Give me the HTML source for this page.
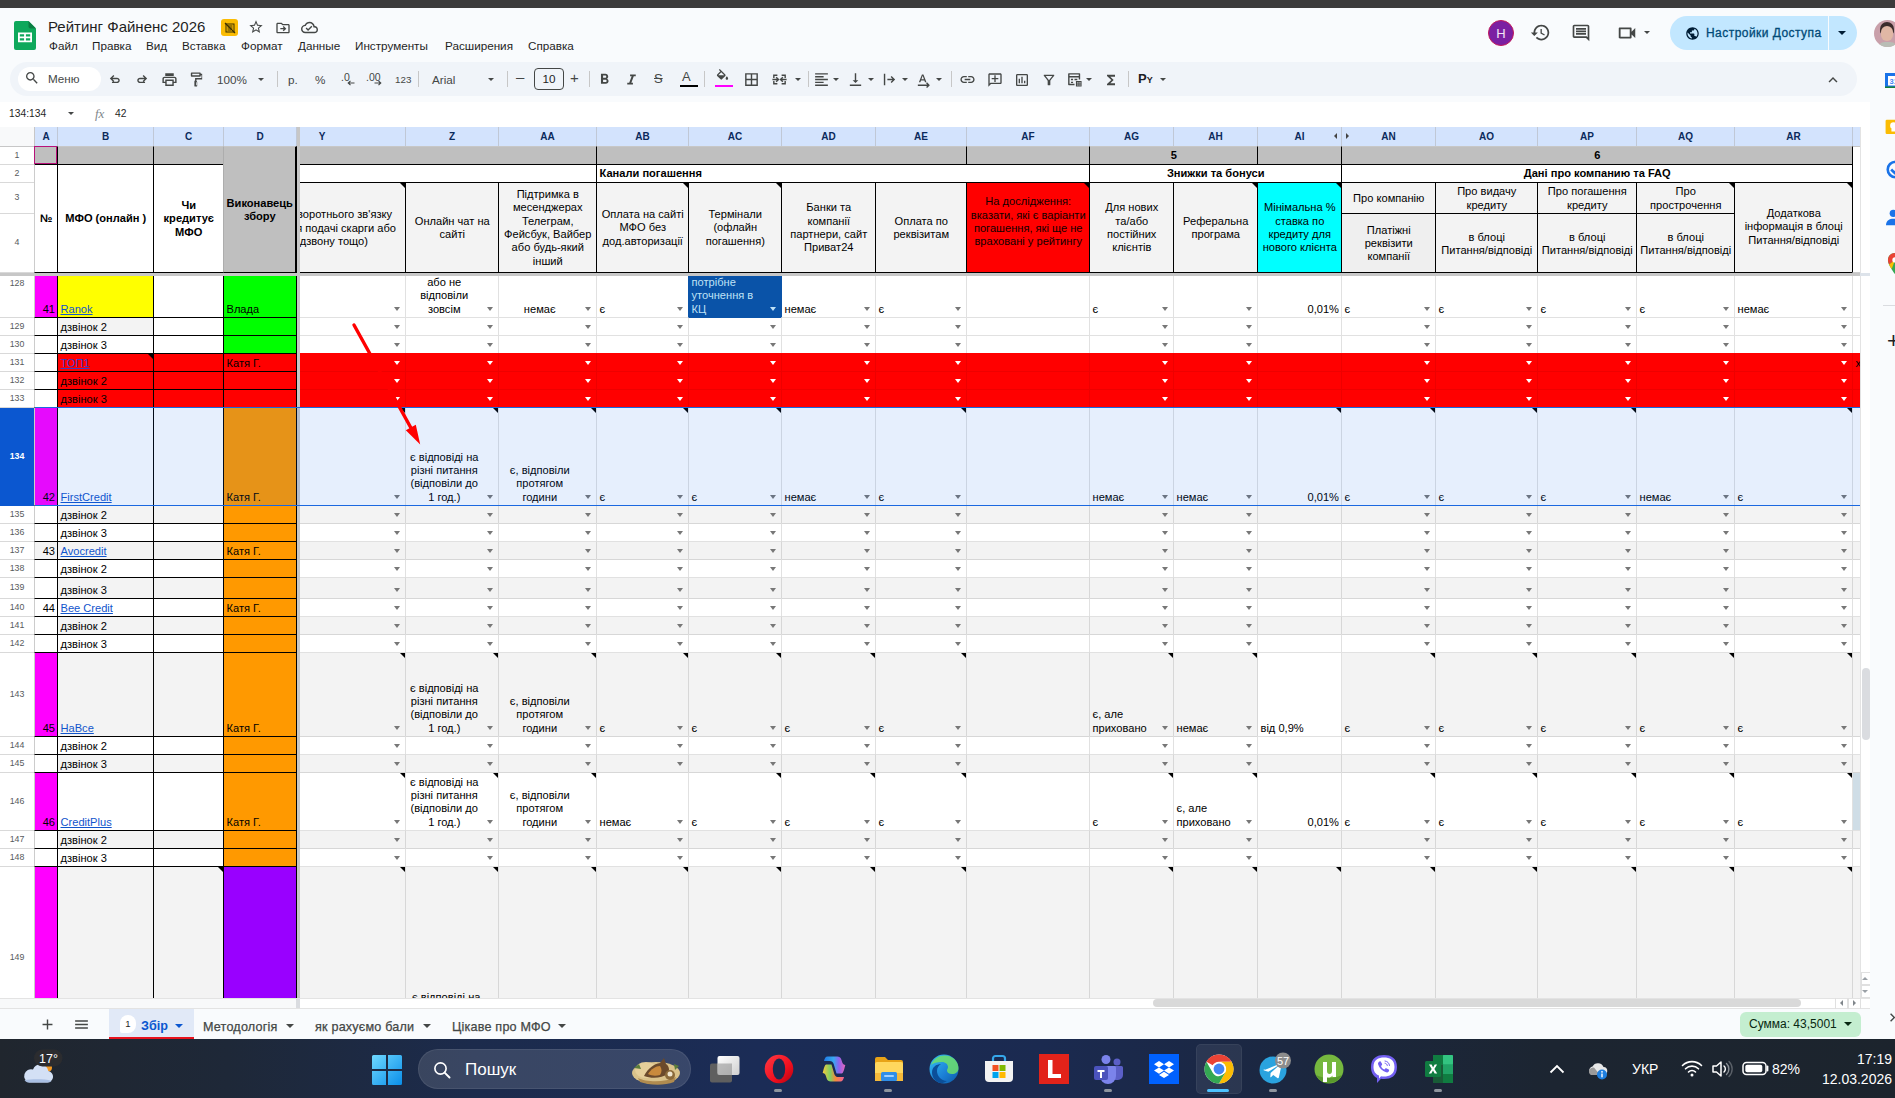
<!DOCTYPE html><html lang="uk"><head><meta charset="utf-8"><title>Рейтинг Файненс 2026</title><style>*{box-sizing:border-box;margin:0;padding:0}
html,body{width:1895px;height:1098px;overflow:hidden;background:#f9fbfd;font-family:"Liberation Sans",sans-serif;}
#grid{position:absolute;left:0;top:0;width:1860px;height:998px;overflow:hidden;clip-path:inset(126px 0 0 0);background:#fff;font-size:11.1px;line-height:13.33px;color:#000}
.c{position:absolute;border:1px solid transparent;background-clip:padding-box;}
.t{position:absolute;left:0;right:0;top:0;bottom:0;padding:0 2px 1px 2.5px;display:flex;overflow:hidden;white-space:nowrap}
.t span{display:block;width:100%}
.hl{text-align:left}.hc{text-align:center}.hr{text-align:right}
.vb{align-items:flex-end}.vm{align-items:center;padding-top:2px}.vt{align-items:flex-start}
.b{font-weight:700}
.t a{color:#1155cc;text-decoration:underline}
.t a.v{color:#3c3cc8}
.dd{position:absolute;right:5px;bottom:6px;width:0;height:0;border-left:3.5px solid transparent;border-right:3.5px solid transparent;border-top:4px solid #777}
.dd.w{border-top-color:#fff}
.dd.lb{border-top-color:#bfe1f6}
.nt{position:absolute;right:0;top:0;width:0;height:0;border-top:5.500px solid #000;border-left:5.500px solid transparent}
.yl{position:absolute;white-space:nowrap}
#colhdr{position:absolute;left:0;top:126px;width:1861px;height:21px;background:#d3e3fd;border-top:1px solid #c7c7c7;border-bottom:1px solid #c7c7c7}
.ch{position:absolute;top:0;height:19px;line-height:19.5px;text-align:center;font-weight:700;color:#0b2a5c;border-right:1px solid #c0c8d6;font-size:10px}
.rh{position:absolute;left:0;width:35px;padding-top:0;text-align:center;color:#575a5d;border-right:1px solid #c7c7c7;border-bottom:1px solid #d9d9d9;background:#fff;font-size:8.800px}
.rh.sel{background:#0b57d0;color:#fff;font-weight:700;border-bottom-color:#0b57d0}
#fzv{position:absolute;left:297px;top:127px;width:3px;height:871px;background:#c7c7c7}
#fzh{position:absolute;left:0;top:273px;width:1860px;height:3px;background:#c7c7c7}
#seltint{position:absolute;left:35px;top:407px;width:1826px;height:99px;background:rgba(14,101,235,.1);border-top:1px solid #1a68e0;border-bottom:1px solid #1a68e0;z-index:6}
#arrow{position:absolute;z-index:7}
.ga{position:absolute;width:0;height:0;border-top:3px solid transparent;border-bottom:3px solid transparent}
.ga.l{border-right:3px solid #444}
.ga.r{border-left:3px solid #444}
#topdark{position:absolute;left:0;top:0;width:1895px;height:8px;background:#3b3b3b;z-index:20}
.ic{position:absolute;display:block;overflow:visible}
#title{position:absolute;left:48px;top:17px;font-size:15px;line-height:20px;color:#1f1f1f;white-space:nowrap}
#ybadge{position:absolute;left:221px;top:19px;width:17px;height:17px;border-radius:3px;background:#fbbc04;display:flex;align-items:center;justify-content:center}
.mn{position:absolute;top:39px;font-size:11.7px;line-height:14px;color:#1f1f1f;white-space:nowrap}
#avH{position:absolute;left:1488px;top:20px;width:26px;height:26px;border-radius:50%;background:#7b1fa2;border:1px solid #c2185b;color:#f3e5f5;font-size:13px;line-height:25px;text-align:center;font-weight:400}
#share{position:absolute;left:1670px;top:16px;width:187px;height:34px;border-radius:17px;background:#c2e7ff;color:#004a77;font-size:12px;line-height:35px;font-weight:400;-webkit-text-stroke:.3px #004a77}
#share span{position:absolute;left:36px;top:0;letter-spacing:.45px;white-space:nowrap}
#share .sdiv{position:absolute;left:158px;top:0;width:1px;height:34px;background:#f9fbfd}
#avU{position:absolute;left:1874px;top:20px;width:27px;height:27px;border-radius:50%;overflow:hidden;background:#c9a0aa}
#avU i{position:absolute;display:block}
.cr{position:absolute;width:0;height:0;border-left:3.500px solid transparent;border-right:3.500px solid transparent}
#tb{position:absolute;left:10px;top:62px;width:1847px;height:34px;border-radius:17px;background:#f0f4f9}
#srch{position:absolute;left:18px;top:67px;width:83px;height:24px;border-radius:12px;background:#fff;font-size:11.700px;line-height:24px;color:#444746}
#srch span{position:absolute;left:30px}
.sp{position:absolute;top:71px;width:1px;height:16px;background:#c7c7c7}
.tt{position:absolute;top:72px;font-size:11.700px;line-height:15px;color:#444746;white-space:nowrap}
.tt.s{font-size:10.500px}
.tt .ar{position:absolute;top:6px;font-size:9px}
#fsz{position:absolute;left:534px;top:68px;width:30px;height:22px;border:1px solid #444746;border-radius:4px;font-size:11.700px;line-height:20px;text-align:center;color:#1f1f1f}
.ub{position:absolute;top:84.500px;width:18px;height:2px}
#fb{position:absolute;left:0;top:102px;width:1870px;height:25px;background:#fff;font-size:10.800px;line-height:23px;color:#1f1f1f}
#fb span{position:absolute;top:0}
#fb .fx{font-family:"Liberation Serif",serif;font-style:italic;color:#80868b;font-size:13px}
#vsb{position:absolute;left:1860px;top:127px;width:10px;height:871px;background:#fff;border-left:1px solid #e3e3e3}
#vsb .vth{position:absolute;left:1px;top:541px;width:8px;height:72px;border-radius:4px;background:#dadce0}
#vsb .vbx{position:absolute;left:0;width:10px;height:13px;border:1px solid #e0e0e0;margin-top:-127px}
.tri{position:absolute;width:0;height:0}
.tri.up{border-left:3px solid transparent;border-right:3px solid transparent;border-bottom:3px solid #9aa0a6}
.tri.dn{border-left:3px solid transparent;border-right:3px solid transparent;border-top:3px solid #9aa0a6}
.tri.lf{border-top:3px solid transparent;border-bottom:3px solid transparent;border-right:3px solid #80868b}
.tri.rt{border-top:3px solid transparent;border-bottom:3px solid transparent;border-left:3px solid #80868b}
#side{position:absolute;left:1870px;top:55px;width:25px;height:984px;background:#f9fbfd}
#hsb{position:absolute;left:0;top:998px;width:1870px;height:11px;background:#fff;border-bottom:1px solid #e3e3e3;border-top:1px solid #e3e3e3}
#hsb .hl{position:absolute;left:0;top:0;width:296px;height:9px;background:#f8f9fa}
#hsb .hk{position:absolute;left:296px;top:0;width:4px;height:9px;background:#dadce0}
#hsb .hth{position:absolute;left:1153px;top:0;width:648px;height:8px;border-radius:4px;background:#d9d9d9}
#hsb .hbx{position:absolute;top:-1px;width:13px;height:11px;border-left:1px solid #e0e0e0;border-right:1px solid #e0e0e0}
#bbar{position:absolute;left:0;top:1009px;width:1870px;height:30px;background:#f9fbfd}
#atab{position:absolute;left:109px;top:1009px;width:85px;height:30px;background:#e1e9f7;border-bottom:2px solid #e8121d;color:#0b57d0;font-size:12.600px;font-weight:700;line-height:35px}
#atab span{position:absolute;left:32px}
#atab .bdg{position:absolute;left:11px;top:6px;width:16px;height:18px;border-radius:8px 8px 8px 2px;background:#fff;color:#1f1f1f;font-size:9.500px;line-height:18px;text-align:center;font-style:normal;font-weight:400}
.tab{position:absolute;top:1012px;font-size:12.600px;line-height:31px;color:#444746;white-space:nowrap;letter-spacing:.2px;-webkit-text-stroke:.25px #444746}
#sum{position:absolute;left:1740px;top:1012px;width:121px;height:25px;border-radius:6px;background:#c4eed0;color:#072711;font-size:12px;line-height:24px;padding-left:9px;white-space:nowrap}
#tk{position:absolute;left:0;top:1039px;width:1895px;height:59px;background:linear-gradient(90deg,#20262e 0%,#1e2838 12%,#1c2b4c 25%,#1b2c56 40%,#1b2a50 55%,#1b2740 68%,#1c2531 82%,#1c242d 100%)}
#tsr{position:absolute;left:418px;top:1049px;width:273px;height:40px;border-radius:20px;background:rgba(255,255,255,.13);border:1px solid rgba(255,255,255,.08);color:#fff;font-size:17px;line-height:40px}
#tsr span{position:absolute;left:46px}
#tkact{position:absolute;left:1196px;top:1044px;width:46px;height:50px;border-radius:5px;background:rgba(255,255,255,.07);border:1px solid rgba(255,255,255,.06)}
.tkdot{position:absolute;top:1089px;width:8px;height:3px;border-radius:2px;background:#8e959e}
.tkdot.a{background:#4cc2ff;height:3px}
.tkt{position:absolute;color:#fff;font-size:14px;line-height:16px;white-space:nowrap}
.tkt.r{right:3px;text-align:right}
</style></head><body>
<div id="grid">
<div id="colhdr"><div class="ch" style="left:0;width:35px;background:#f8f9fa;border-right-color:#c7c7c7"></div><div class="ch" style="left:35px;width:23px">A</div><div class="ch" style="left:58px;width:96px">B</div><div class="ch" style="left:154px;width:70px">C</div><div class="ch" style="left:224px;width:73px">D</div><div class="ch" style="left:300px;width:106px;overflow:hidden"><span style="position:absolute;left:-61px;width:166px">Y</span></div><div class="ch" style="left:406px;width:93px">Z</div><div class="ch" style="left:499px;width:98px">AA</div><div class="ch" style="left:597px;width:92px">AB</div><div class="ch" style="left:689px;width:93px">AC</div><div class="ch" style="left:782px;width:94px">AD</div><div class="ch" style="left:876px;width:91px">AE</div><div class="ch" style="left:967px;width:123px">AF</div><div class="ch" style="left:1090px;width:84px">AG</div><div class="ch" style="left:1174px;width:84px">AH</div><div class="ch" style="left:1258px;width:84px">AI</div><div class="ch" style="left:1342px;width:94px">AN</div><div class="ch" style="left:1436px;width:102px">AO</div><div class="ch" style="left:1538px;width:99px">AP</div><div class="ch" style="left:1637px;width:98px">AQ</div><div class="ch" style="left:1735px;width:118px">AR</div><div class="ch" style="left:1853px;width:23px"></div><i class="ga l" style="left:1334px;top:6px"></i><i class="ga r" style="left:1346px;top:6px"></i></div>
<div class="rh" style="top:147px;height:18px;line-height:16px">1</div><div class="rh" style="top:165px;height:18px;line-height:16px">2</div><div class="rh" style="top:183px;height:31px;line-height:29px">3</div><div class="rh" style="top:214px;height:59px;line-height:57px">4</div><div class="rh" style="top:276px;height:42px;line-height:14px">128</div><div class="rh" style="top:318px;height:18px;line-height:16px">129</div><div class="rh" style="top:336px;height:18px;line-height:16px">130</div><div class="rh" style="top:354px;height:18px;line-height:16px">131</div><div class="rh" style="top:372px;height:18px;line-height:16px">132</div><div class="rh" style="top:390px;height:18px;line-height:16px">133</div><div class="rh sel" style="top:408px;height:98px;line-height:96px">134</div><div class="rh" style="top:506px;height:18px;line-height:16px">135</div><div class="rh" style="top:524px;height:18px;line-height:16px">136</div><div class="rh" style="top:542px;height:18px;line-height:16px">137</div><div class="rh" style="top:560px;height:18px;line-height:16px">138</div><div class="rh" style="top:578px;height:21px;line-height:19px">139</div><div class="rh" style="top:599px;height:18px;line-height:16px">140</div><div class="rh" style="top:617px;height:18px;line-height:16px">141</div><div class="rh" style="top:635px;height:18px;line-height:16px">142</div><div class="rh" style="top:653px;height:84px;line-height:82px">143</div><div class="rh" style="top:737px;height:18px;line-height:16px">144</div><div class="rh" style="top:755px;height:18px;line-height:16px">145</div><div class="rh" style="top:773px;height:58px;line-height:56px">146</div><div class="rh" style="top:831px;height:18px;line-height:16px">147</div><div class="rh" style="top:849px;height:18px;line-height:16px">148</div><div class="rh" style="top:867px;height:146px;line-height:180px">149</div>
<div class="c " style="left:299px;top:275px;width:107px;height:43px;background-color:#fff;border-right-color:#e1e1e1;border-bottom-color:#e1e1e1;"><i class="dd"></i></div>
<div class="c " style="left:405px;top:275px;width:94px;height:43px;background-color:#fff;border-right-color:#e1e1e1;border-bottom-color:#e1e1e1;"><div class="t hc vb" style="padding-right:18px;"><span>або не<br>відповіли<br>зовсім</span></div><i class="dd"></i></div>
<div class="c " style="left:498px;top:275px;width:99px;height:43px;background-color:#fff;border-right-color:#e1e1e1;border-bottom-color:#e1e1e1;"><div class="t hc vb" style="padding-right:18px;"><span>немає</span></div><i class="dd"></i></div>
<div class="c " style="left:596px;top:275px;width:93px;height:43px;background-color:#fff;border-right-color:#e1e1e1;border-bottom-color:#e1e1e1;"><div class="t hl vb" style="padding-right:16px;"><span>є</span></div><i class="dd"></i></div>
<div class="c " style="left:688px;top:275px;width:94px;height:43px;background-color:#0a53a8;border-left-color:#0a53a8;border-right-color:#0a53a8;border-bottom-color:#0a53a8;"><div class="t hl vb" style="padding-right:16px;color:#bfe1f6;"><span>потрібне<br>уточнення в<br>КЦ</span></div><i class="dd lb"></i></div>
<div class="c " style="left:781px;top:275px;width:95px;height:43px;background-color:#fff;border-right-color:#e1e1e1;border-bottom-color:#e1e1e1;"><div class="t hl vb" style="padding-right:16px;"><span>немає</span></div><i class="dd"></i></div>
<div class="c " style="left:875px;top:275px;width:92px;height:43px;background-color:#fff;border-right-color:#e1e1e1;border-bottom-color:#e1e1e1;"><div class="t hl vb" style="padding-right:16px;"><span>є</span></div><i class="dd"></i></div>
<div class="c " style="left:966px;top:275px;width:124px;height:43px;background-color:#fff;border-right-color:#e1e1e1;border-bottom-color:#e1e1e1;"></div>
<div class="c " style="left:1089px;top:275px;width:85px;height:43px;background-color:#fff;border-right-color:#e1e1e1;border-bottom-color:#e1e1e1;"><div class="t hl vb" style="padding-right:16px;"><span>є</span></div><i class="dd"></i></div>
<div class="c " style="left:1173px;top:275px;width:85px;height:43px;background-color:#fff;border-right-color:#e1e1e1;border-bottom-color:#e1e1e1;"><i class="dd"></i></div>
<div class="c " style="left:1257px;top:275px;width:85px;height:43px;background-color:#fff;border-right-color:#e1e1e1;border-bottom-color:#e1e1e1;"><div class="t hr vb" style=""><span>0,01%</span></div></div>
<div class="c " style="left:1341px;top:275px;width:95px;height:43px;background-color:#fff;border-right-color:#e1e1e1;border-bottom-color:#e1e1e1;"><div class="t hl vb" style="padding-right:16px;"><span>є</span></div><i class="dd"></i></div>
<div class="c " style="left:1435px;top:275px;width:103px;height:43px;background-color:#fff;border-right-color:#e1e1e1;border-bottom-color:#e1e1e1;"><div class="t hl vb" style="padding-right:16px;"><span>є</span></div><i class="dd"></i></div>
<div class="c " style="left:1537px;top:275px;width:100px;height:43px;background-color:#fff;border-right-color:#e1e1e1;border-bottom-color:#e1e1e1;"><div class="t hl vb" style="padding-right:16px;"><span>є</span></div><i class="dd"></i></div>
<div class="c " style="left:1636px;top:275px;width:99px;height:43px;background-color:#fff;border-right-color:#e1e1e1;border-bottom-color:#e1e1e1;"><div class="t hl vb" style="padding-right:16px;"><span>є</span></div><i class="dd"></i></div>
<div class="c " style="left:1734px;top:275px;width:119px;height:43px;background-color:#fff;border-right-color:#e1e1e1;border-bottom-color:#e1e1e1;"><div class="t hl vb" style="padding-right:16px;"><span>немає</span></div><i class="dd"></i></div>
<div class="c " style="left:1852px;top:275px;width:24px;height:43px;background-color:#fff;border-right-color:#e1e1e1;border-bottom-color:#e1e1e1;"></div>
<div class="c " style="left:299px;top:317px;width:107px;height:19px;background-color:#fff;border-right-color:#e1e1e1;border-bottom-color:#e1e1e1;"><i class="dd"></i></div>
<div class="c " style="left:405px;top:317px;width:94px;height:19px;background-color:#fff;border-right-color:#e1e1e1;border-bottom-color:#e1e1e1;"><i class="dd"></i></div>
<div class="c " style="left:498px;top:317px;width:99px;height:19px;background-color:#fff;border-right-color:#e1e1e1;border-bottom-color:#e1e1e1;"><i class="dd"></i></div>
<div class="c " style="left:596px;top:317px;width:93px;height:19px;background-color:#fff;border-right-color:#e1e1e1;border-bottom-color:#e1e1e1;"><i class="dd"></i></div>
<div class="c " style="left:688px;top:317px;width:94px;height:19px;background-color:#fff;border-right-color:#e1e1e1;border-bottom-color:#e1e1e1;"><i class="dd"></i></div>
<div class="c " style="left:781px;top:317px;width:95px;height:19px;background-color:#fff;border-right-color:#e1e1e1;border-bottom-color:#e1e1e1;"><i class="dd"></i></div>
<div class="c " style="left:875px;top:317px;width:92px;height:19px;background-color:#fff;border-right-color:#e1e1e1;border-bottom-color:#e1e1e1;"><i class="dd"></i></div>
<div class="c " style="left:966px;top:317px;width:124px;height:19px;background-color:#fff;border-right-color:#e1e1e1;border-bottom-color:#e1e1e1;"></div>
<div class="c " style="left:1089px;top:317px;width:85px;height:19px;background-color:#fff;border-right-color:#e1e1e1;border-bottom-color:#e1e1e1;"><i class="dd"></i></div>
<div class="c " style="left:1173px;top:317px;width:85px;height:19px;background-color:#fff;border-right-color:#e1e1e1;border-bottom-color:#e1e1e1;"><i class="dd"></i></div>
<div class="c " style="left:1257px;top:317px;width:85px;height:19px;background-color:#fff;border-right-color:#e1e1e1;border-bottom-color:#e1e1e1;"></div>
<div class="c " style="left:1341px;top:317px;width:95px;height:19px;background-color:#fff;border-right-color:#e1e1e1;border-bottom-color:#e1e1e1;"><i class="dd"></i></div>
<div class="c " style="left:1435px;top:317px;width:103px;height:19px;background-color:#fff;border-right-color:#e1e1e1;border-bottom-color:#e1e1e1;"><i class="dd"></i></div>
<div class="c " style="left:1537px;top:317px;width:100px;height:19px;background-color:#fff;border-right-color:#e1e1e1;border-bottom-color:#e1e1e1;"><i class="dd"></i></div>
<div class="c " style="left:1636px;top:317px;width:99px;height:19px;background-color:#fff;border-right-color:#e1e1e1;border-bottom-color:#e1e1e1;"><i class="dd"></i></div>
<div class="c " style="left:1734px;top:317px;width:119px;height:19px;background-color:#fff;border-right-color:#e1e1e1;border-bottom-color:#e1e1e1;"><i class="dd"></i></div>
<div class="c " style="left:1852px;top:317px;width:24px;height:19px;background-color:#fff;border-right-color:#e1e1e1;border-bottom-color:#e1e1e1;"></div>
<div class="c " style="left:299px;top:335px;width:107px;height:19px;background-color:#fff;border-right-color:#e1e1e1;border-bottom-color:#e1e1e1;"><i class="dd"></i></div>
<div class="c " style="left:405px;top:335px;width:94px;height:19px;background-color:#fff;border-right-color:#e1e1e1;border-bottom-color:#e1e1e1;"><i class="dd"></i></div>
<div class="c " style="left:498px;top:335px;width:99px;height:19px;background-color:#fff;border-right-color:#e1e1e1;border-bottom-color:#e1e1e1;"><i class="dd"></i></div>
<div class="c " style="left:596px;top:335px;width:93px;height:19px;background-color:#fff;border-right-color:#e1e1e1;border-bottom-color:#e1e1e1;"><i class="dd"></i></div>
<div class="c " style="left:688px;top:335px;width:94px;height:19px;background-color:#fff;border-right-color:#e1e1e1;border-bottom-color:#e1e1e1;"><i class="dd"></i></div>
<div class="c " style="left:781px;top:335px;width:95px;height:19px;background-color:#fff;border-right-color:#e1e1e1;border-bottom-color:#e1e1e1;"><i class="dd"></i></div>
<div class="c " style="left:875px;top:335px;width:92px;height:19px;background-color:#fff;border-right-color:#e1e1e1;border-bottom-color:#e1e1e1;"><i class="dd"></i></div>
<div class="c " style="left:966px;top:335px;width:124px;height:19px;background-color:#fff;border-right-color:#e1e1e1;border-bottom-color:#e1e1e1;"></div>
<div class="c " style="left:1089px;top:335px;width:85px;height:19px;background-color:#fff;border-right-color:#e1e1e1;border-bottom-color:#e1e1e1;"><i class="dd"></i></div>
<div class="c " style="left:1173px;top:335px;width:85px;height:19px;background-color:#fff;border-right-color:#e1e1e1;border-bottom-color:#e1e1e1;"><i class="dd"></i></div>
<div class="c " style="left:1257px;top:335px;width:85px;height:19px;background-color:#fff;border-right-color:#e1e1e1;border-bottom-color:#e1e1e1;"></div>
<div class="c " style="left:1341px;top:335px;width:95px;height:19px;background-color:#fff;border-right-color:#e1e1e1;border-bottom-color:#e1e1e1;"><i class="dd"></i></div>
<div class="c " style="left:1435px;top:335px;width:103px;height:19px;background-color:#fff;border-right-color:#e1e1e1;border-bottom-color:#e1e1e1;"><i class="dd"></i></div>
<div class="c " style="left:1537px;top:335px;width:100px;height:19px;background-color:#fff;border-right-color:#e1e1e1;border-bottom-color:#e1e1e1;"><i class="dd"></i></div>
<div class="c " style="left:1636px;top:335px;width:99px;height:19px;background-color:#fff;border-right-color:#e1e1e1;border-bottom-color:#e1e1e1;"><i class="dd"></i></div>
<div class="c " style="left:1734px;top:335px;width:119px;height:19px;background-color:#fff;border-right-color:#e1e1e1;border-bottom-color:#e1e1e1;"><i class="dd"></i></div>
<div class="c " style="left:1852px;top:335px;width:24px;height:19px;background-color:#fff;border-right-color:#e1e1e1;border-bottom-color:#e1e1e1;"></div>
<div class="c " style="left:299px;top:353px;width:107px;height:19px;background-color:#ff0000;border-top-color:#ff0000;border-right-color:#ee0000;border-bottom-color:#ee0000;"><i class="dd w"></i></div>
<div class="c " style="left:405px;top:353px;width:94px;height:19px;background-color:#ff0000;border-top-color:#ff0000;border-right-color:#ee0000;border-bottom-color:#ee0000;"><i class="dd w"></i></div>
<div class="c " style="left:498px;top:353px;width:99px;height:19px;background-color:#ff0000;border-top-color:#ff0000;border-right-color:#ee0000;border-bottom-color:#ee0000;"><i class="dd w"></i></div>
<div class="c " style="left:596px;top:353px;width:93px;height:19px;background-color:#ff0000;border-top-color:#ff0000;border-right-color:#ee0000;border-bottom-color:#ee0000;"><i class="dd w"></i></div>
<div class="c " style="left:688px;top:353px;width:94px;height:19px;background-color:#ff0000;border-top-color:#ff0000;border-right-color:#ee0000;border-bottom-color:#ee0000;"><i class="dd w"></i></div>
<div class="c " style="left:781px;top:353px;width:95px;height:19px;background-color:#ff0000;border-top-color:#ff0000;border-right-color:#ee0000;border-bottom-color:#ee0000;"><i class="dd w"></i></div>
<div class="c " style="left:875px;top:353px;width:92px;height:19px;background-color:#ff0000;border-top-color:#ff0000;border-right-color:#ee0000;border-bottom-color:#ee0000;"><i class="dd w"></i></div>
<div class="c " style="left:966px;top:353px;width:124px;height:19px;background-color:#ff0000;border-top-color:#ff0000;border-right-color:#ee0000;border-bottom-color:#ee0000;"></div>
<div class="c " style="left:1089px;top:353px;width:85px;height:19px;background-color:#ff0000;border-top-color:#ff0000;border-right-color:#ee0000;border-bottom-color:#ee0000;"><i class="dd w"></i></div>
<div class="c " style="left:1173px;top:353px;width:85px;height:19px;background-color:#ff0000;border-top-color:#ff0000;border-right-color:#ee0000;border-bottom-color:#ee0000;"><i class="dd w"></i></div>
<div class="c " style="left:1257px;top:353px;width:85px;height:19px;background-color:#ff0000;border-top-color:#ff0000;border-right-color:#ee0000;border-bottom-color:#ee0000;"></div>
<div class="c " style="left:1341px;top:353px;width:95px;height:19px;background-color:#ff0000;border-top-color:#ff0000;border-right-color:#ee0000;border-bottom-color:#ee0000;"><i class="dd w"></i></div>
<div class="c " style="left:1435px;top:353px;width:103px;height:19px;background-color:#ff0000;border-top-color:#ff0000;border-right-color:#ee0000;border-bottom-color:#ee0000;"><i class="dd w"></i></div>
<div class="c " style="left:1537px;top:353px;width:100px;height:19px;background-color:#ff0000;border-top-color:#ff0000;border-right-color:#ee0000;border-bottom-color:#ee0000;"><i class="dd w"></i></div>
<div class="c " style="left:1636px;top:353px;width:99px;height:19px;background-color:#ff0000;border-top-color:#ff0000;border-right-color:#ee0000;border-bottom-color:#ee0000;"><i class="dd w"></i></div>
<div class="c " style="left:1734px;top:353px;width:119px;height:19px;background-color:#ff0000;border-top-color:#ff0000;border-right-color:#ee0000;border-bottom-color:#ee0000;"><i class="dd w"></i></div>
<div class="c " style="left:1852px;top:353px;width:24px;height:19px;background-color:#ff0000;border-top-color:#ff0000;border-right-color:#ee0000;border-bottom-color:#ee0000;"></div>
<div class="c " style="left:299px;top:371px;width:107px;height:19px;background-color:#ff0000;border-right-color:#ee0000;border-bottom-color:#ee0000;"><i class="dd w"></i></div>
<div class="c " style="left:405px;top:371px;width:94px;height:19px;background-color:#ff0000;border-right-color:#ee0000;border-bottom-color:#ee0000;"><i class="dd w"></i></div>
<div class="c " style="left:498px;top:371px;width:99px;height:19px;background-color:#ff0000;border-right-color:#ee0000;border-bottom-color:#ee0000;"><i class="dd w"></i></div>
<div class="c " style="left:596px;top:371px;width:93px;height:19px;background-color:#ff0000;border-right-color:#ee0000;border-bottom-color:#ee0000;"><i class="dd w"></i></div>
<div class="c " style="left:688px;top:371px;width:94px;height:19px;background-color:#ff0000;border-right-color:#ee0000;border-bottom-color:#ee0000;"><i class="dd w"></i></div>
<div class="c " style="left:781px;top:371px;width:95px;height:19px;background-color:#ff0000;border-right-color:#ee0000;border-bottom-color:#ee0000;"><i class="dd w"></i></div>
<div class="c " style="left:875px;top:371px;width:92px;height:19px;background-color:#ff0000;border-right-color:#ee0000;border-bottom-color:#ee0000;"><i class="dd w"></i></div>
<div class="c " style="left:966px;top:371px;width:124px;height:19px;background-color:#ff0000;border-right-color:#ee0000;border-bottom-color:#ee0000;"></div>
<div class="c " style="left:1089px;top:371px;width:85px;height:19px;background-color:#ff0000;border-right-color:#ee0000;border-bottom-color:#ee0000;"><i class="dd w"></i></div>
<div class="c " style="left:1173px;top:371px;width:85px;height:19px;background-color:#ff0000;border-right-color:#ee0000;border-bottom-color:#ee0000;"><i class="dd w"></i></div>
<div class="c " style="left:1257px;top:371px;width:85px;height:19px;background-color:#ff0000;border-right-color:#ee0000;border-bottom-color:#ee0000;"></div>
<div class="c " style="left:1341px;top:371px;width:95px;height:19px;background-color:#ff0000;border-right-color:#ee0000;border-bottom-color:#ee0000;"><i class="dd w"></i></div>
<div class="c " style="left:1435px;top:371px;width:103px;height:19px;background-color:#ff0000;border-right-color:#ee0000;border-bottom-color:#ee0000;"><i class="dd w"></i></div>
<div class="c " style="left:1537px;top:371px;width:100px;height:19px;background-color:#ff0000;border-right-color:#ee0000;border-bottom-color:#ee0000;"><i class="dd w"></i></div>
<div class="c " style="left:1636px;top:371px;width:99px;height:19px;background-color:#ff0000;border-right-color:#ee0000;border-bottom-color:#ee0000;"><i class="dd w"></i></div>
<div class="c " style="left:1734px;top:371px;width:119px;height:19px;background-color:#ff0000;border-right-color:#ee0000;border-bottom-color:#ee0000;"><i class="dd w"></i></div>
<div class="c " style="left:1852px;top:371px;width:24px;height:19px;background-color:#ff0000;border-right-color:#ee0000;border-bottom-color:#ee0000;"></div>
<div class="c " style="left:299px;top:389px;width:107px;height:19px;background-color:#ff0000;border-right-color:#ee0000;border-bottom-color:#ee0000;"><i class="dd w"></i></div>
<div class="c " style="left:405px;top:389px;width:94px;height:19px;background-color:#ff0000;border-right-color:#ee0000;border-bottom-color:#ee0000;"><i class="dd w"></i></div>
<div class="c " style="left:498px;top:389px;width:99px;height:19px;background-color:#ff0000;border-right-color:#ee0000;border-bottom-color:#ee0000;"><i class="dd w"></i></div>
<div class="c " style="left:596px;top:389px;width:93px;height:19px;background-color:#ff0000;border-right-color:#ee0000;border-bottom-color:#ee0000;"><i class="dd w"></i></div>
<div class="c " style="left:688px;top:389px;width:94px;height:19px;background-color:#ff0000;border-right-color:#ee0000;border-bottom-color:#ee0000;"><i class="dd w"></i></div>
<div class="c " style="left:781px;top:389px;width:95px;height:19px;background-color:#ff0000;border-right-color:#ee0000;border-bottom-color:#ee0000;"><i class="dd w"></i></div>
<div class="c " style="left:875px;top:389px;width:92px;height:19px;background-color:#ff0000;border-right-color:#ee0000;border-bottom-color:#ee0000;"><i class="dd w"></i></div>
<div class="c " style="left:966px;top:389px;width:124px;height:19px;background-color:#ff0000;border-right-color:#ee0000;border-bottom-color:#ee0000;"></div>
<div class="c " style="left:1089px;top:389px;width:85px;height:19px;background-color:#ff0000;border-right-color:#ee0000;border-bottom-color:#ee0000;"><i class="dd w"></i></div>
<div class="c " style="left:1173px;top:389px;width:85px;height:19px;background-color:#ff0000;border-right-color:#ee0000;border-bottom-color:#ee0000;"><i class="dd w"></i></div>
<div class="c " style="left:1257px;top:389px;width:85px;height:19px;background-color:#ff0000;border-right-color:#ee0000;border-bottom-color:#ee0000;"></div>
<div class="c " style="left:1341px;top:389px;width:95px;height:19px;background-color:#ff0000;border-right-color:#ee0000;border-bottom-color:#ee0000;"><i class="dd w"></i></div>
<div class="c " style="left:1435px;top:389px;width:103px;height:19px;background-color:#ff0000;border-right-color:#ee0000;border-bottom-color:#ee0000;"><i class="dd w"></i></div>
<div class="c " style="left:1537px;top:389px;width:100px;height:19px;background-color:#ff0000;border-right-color:#ee0000;border-bottom-color:#ee0000;"><i class="dd w"></i></div>
<div class="c " style="left:1636px;top:389px;width:99px;height:19px;background-color:#ff0000;border-right-color:#ee0000;border-bottom-color:#ee0000;"><i class="dd w"></i></div>
<div class="c " style="left:1734px;top:389px;width:119px;height:19px;background-color:#ff0000;border-right-color:#ee0000;border-bottom-color:#ee0000;"><i class="dd w"></i></div>
<div class="c " style="left:1852px;top:389px;width:24px;height:19px;background-color:#ff0000;border-right-color:#ee0000;border-bottom-color:#ee0000;"></div>
<div class="c " style="left:299px;top:407px;width:107px;height:99px;background-color:#fff;border-right-color:#e1e1e1;border-bottom-color:#e1e1e1;"><i class="dd"></i><i class="nt"></i></div>
<div class="c " style="left:405px;top:407px;width:94px;height:99px;background-color:#fff;border-right-color:#e1e1e1;border-bottom-color:#e1e1e1;"><div class="t hc vb" style="padding-right:18px;"><span>є відповіді на<br>різні питання<br>(відповіли до<br>1 год.)</span></div><i class="dd"></i><i class="nt"></i></div>
<div class="c " style="left:498px;top:407px;width:99px;height:99px;background-color:#fff;border-right-color:#e1e1e1;border-bottom-color:#e1e1e1;"><div class="t hc vb" style="padding-right:18px;"><span>є, відповіли<br>протягом<br>години</span></div><i class="dd"></i><i class="nt"></i></div>
<div class="c " style="left:596px;top:407px;width:93px;height:99px;background-color:#fff;border-right-color:#e1e1e1;border-bottom-color:#e1e1e1;"><div class="t hl vb" style="padding-right:16px;"><span>є</span></div><i class="dd"></i><i class="nt"></i></div>
<div class="c " style="left:688px;top:407px;width:94px;height:99px;background-color:#fff;border-right-color:#e1e1e1;border-bottom-color:#e1e1e1;"><div class="t hl vb" style="padding-right:16px;"><span>є</span></div><i class="dd"></i><i class="nt"></i></div>
<div class="c " style="left:781px;top:407px;width:95px;height:99px;background-color:#fff;border-right-color:#e1e1e1;border-bottom-color:#e1e1e1;"><div class="t hl vb" style="padding-right:16px;"><span>немає</span></div><i class="dd"></i></div>
<div class="c " style="left:875px;top:407px;width:92px;height:99px;background-color:#fff;border-right-color:#e1e1e1;border-bottom-color:#e1e1e1;"><div class="t hl vb" style="padding-right:16px;"><span>є</span></div><i class="dd"></i><i class="nt"></i></div>
<div class="c " style="left:966px;top:407px;width:124px;height:99px;background-color:#fff;border-right-color:#e1e1e1;border-bottom-color:#e1e1e1;"></div>
<div class="c " style="left:1089px;top:407px;width:85px;height:99px;background-color:#fff;border-right-color:#e1e1e1;border-bottom-color:#e1e1e1;"><div class="t hl vb" style="padding-right:16px;"><span>немає</span></div><i class="dd"></i></div>
<div class="c " style="left:1173px;top:407px;width:85px;height:99px;background-color:#fff;border-right-color:#e1e1e1;border-bottom-color:#e1e1e1;"><div class="t hl vb" style="padding-right:16px;"><span>немає</span></div><i class="dd"></i></div>
<div class="c " style="left:1257px;top:407px;width:85px;height:99px;background-color:#fff;border-right-color:#e1e1e1;border-bottom-color:#e1e1e1;"><div class="t hr vb" style=""><span>0,01%</span></div><i class="nt"></i></div>
<div class="c " style="left:1341px;top:407px;width:95px;height:99px;background-color:#fff;border-right-color:#e1e1e1;border-bottom-color:#e1e1e1;"><div class="t hl vb" style="padding-right:16px;"><span>є</span></div><i class="dd"></i><i class="nt"></i></div>
<div class="c " style="left:1435px;top:407px;width:103px;height:99px;background-color:#fff;border-right-color:#e1e1e1;border-bottom-color:#e1e1e1;"><div class="t hl vb" style="padding-right:16px;"><span>є</span></div><i class="dd"></i><i class="nt"></i></div>
<div class="c " style="left:1537px;top:407px;width:100px;height:99px;background-color:#fff;border-right-color:#e1e1e1;border-bottom-color:#e1e1e1;"><div class="t hl vb" style="padding-right:16px;"><span>є</span></div><i class="dd"></i><i class="nt"></i></div>
<div class="c " style="left:1636px;top:407px;width:99px;height:99px;background-color:#fff;border-right-color:#e1e1e1;border-bottom-color:#e1e1e1;"><div class="t hl vb" style="padding-right:16px;"><span>немає</span></div><i class="dd"></i></div>
<div class="c " style="left:1734px;top:407px;width:119px;height:99px;background-color:#fff;border-right-color:#e1e1e1;border-bottom-color:#e1e1e1;"><div class="t hl vb" style="padding-right:16px;"><span>є</span></div><i class="dd"></i><i class="nt"></i></div>
<div class="c " style="left:1852px;top:407px;width:24px;height:99px;background-color:#fff;border-right-color:#e1e1e1;border-bottom-color:#e1e1e1;"></div>
<div class="c " style="left:299px;top:505px;width:107px;height:19px;background-color:#f3f3f3;border-right-color:#d7d7d7;border-bottom-color:#d7d7d7;"><i class="dd"></i></div>
<div class="c " style="left:405px;top:505px;width:94px;height:19px;background-color:#f3f3f3;border-right-color:#d7d7d7;border-bottom-color:#d7d7d7;"><i class="dd"></i></div>
<div class="c " style="left:498px;top:505px;width:99px;height:19px;background-color:#f3f3f3;border-right-color:#d7d7d7;border-bottom-color:#d7d7d7;"><i class="dd"></i></div>
<div class="c " style="left:596px;top:505px;width:93px;height:19px;background-color:#f3f3f3;border-right-color:#d7d7d7;border-bottom-color:#d7d7d7;"><i class="dd"></i></div>
<div class="c " style="left:688px;top:505px;width:94px;height:19px;background-color:#f3f3f3;border-right-color:#d7d7d7;border-bottom-color:#d7d7d7;"><i class="dd"></i></div>
<div class="c " style="left:781px;top:505px;width:95px;height:19px;background-color:#f3f3f3;border-right-color:#d7d7d7;border-bottom-color:#d7d7d7;"><i class="dd"></i></div>
<div class="c " style="left:875px;top:505px;width:92px;height:19px;background-color:#f3f3f3;border-right-color:#d7d7d7;border-bottom-color:#d7d7d7;"><i class="dd"></i></div>
<div class="c " style="left:966px;top:505px;width:124px;height:19px;background-color:#f3f3f3;border-right-color:#d7d7d7;border-bottom-color:#d7d7d7;"></div>
<div class="c " style="left:1089px;top:505px;width:85px;height:19px;background-color:#f3f3f3;border-right-color:#d7d7d7;border-bottom-color:#d7d7d7;"><i class="dd"></i></div>
<div class="c " style="left:1173px;top:505px;width:85px;height:19px;background-color:#f3f3f3;border-right-color:#d7d7d7;border-bottom-color:#d7d7d7;"><i class="dd"></i></div>
<div class="c " style="left:1257px;top:505px;width:85px;height:19px;background-color:#f3f3f3;border-right-color:#d7d7d7;border-bottom-color:#d7d7d7;"></div>
<div class="c " style="left:1341px;top:505px;width:95px;height:19px;background-color:#f3f3f3;border-right-color:#d7d7d7;border-bottom-color:#d7d7d7;"><i class="dd"></i></div>
<div class="c " style="left:1435px;top:505px;width:103px;height:19px;background-color:#f3f3f3;border-right-color:#d7d7d7;border-bottom-color:#d7d7d7;"><i class="dd"></i></div>
<div class="c " style="left:1537px;top:505px;width:100px;height:19px;background-color:#f3f3f3;border-right-color:#d7d7d7;border-bottom-color:#d7d7d7;"><i class="dd"></i></div>
<div class="c " style="left:1636px;top:505px;width:99px;height:19px;background-color:#f3f3f3;border-right-color:#d7d7d7;border-bottom-color:#d7d7d7;"><i class="dd"></i></div>
<div class="c " style="left:1734px;top:505px;width:119px;height:19px;background-color:#f3f3f3;border-right-color:#d7d7d7;border-bottom-color:#d7d7d7;"><i class="dd"></i></div>
<div class="c " style="left:1852px;top:505px;width:24px;height:19px;background-color:#f3f3f3;border-right-color:#d7d7d7;border-bottom-color:#d7d7d7;"></div>
<div class="c " style="left:299px;top:523px;width:107px;height:19px;background-color:#fff;border-right-color:#e1e1e1;border-bottom-color:#e1e1e1;"><i class="dd"></i></div>
<div class="c " style="left:405px;top:523px;width:94px;height:19px;background-color:#fff;border-right-color:#e1e1e1;border-bottom-color:#e1e1e1;"><i class="dd"></i></div>
<div class="c " style="left:498px;top:523px;width:99px;height:19px;background-color:#fff;border-right-color:#e1e1e1;border-bottom-color:#e1e1e1;"><i class="dd"></i></div>
<div class="c " style="left:596px;top:523px;width:93px;height:19px;background-color:#fff;border-right-color:#e1e1e1;border-bottom-color:#e1e1e1;"><i class="dd"></i></div>
<div class="c " style="left:688px;top:523px;width:94px;height:19px;background-color:#fff;border-right-color:#e1e1e1;border-bottom-color:#e1e1e1;"><i class="dd"></i></div>
<div class="c " style="left:781px;top:523px;width:95px;height:19px;background-color:#fff;border-right-color:#e1e1e1;border-bottom-color:#e1e1e1;"><i class="dd"></i></div>
<div class="c " style="left:875px;top:523px;width:92px;height:19px;background-color:#fff;border-right-color:#e1e1e1;border-bottom-color:#e1e1e1;"><i class="dd"></i></div>
<div class="c " style="left:966px;top:523px;width:124px;height:19px;background-color:#fff;border-right-color:#e1e1e1;border-bottom-color:#e1e1e1;"></div>
<div class="c " style="left:1089px;top:523px;width:85px;height:19px;background-color:#fff;border-right-color:#e1e1e1;border-bottom-color:#e1e1e1;"><i class="dd"></i></div>
<div class="c " style="left:1173px;top:523px;width:85px;height:19px;background-color:#fff;border-right-color:#e1e1e1;border-bottom-color:#e1e1e1;"><i class="dd"></i></div>
<div class="c " style="left:1257px;top:523px;width:85px;height:19px;background-color:#fff;border-right-color:#e1e1e1;border-bottom-color:#e1e1e1;"></div>
<div class="c " style="left:1341px;top:523px;width:95px;height:19px;background-color:#fff;border-right-color:#e1e1e1;border-bottom-color:#e1e1e1;"><i class="dd"></i></div>
<div class="c " style="left:1435px;top:523px;width:103px;height:19px;background-color:#fff;border-right-color:#e1e1e1;border-bottom-color:#e1e1e1;"><i class="dd"></i></div>
<div class="c " style="left:1537px;top:523px;width:100px;height:19px;background-color:#fff;border-right-color:#e1e1e1;border-bottom-color:#e1e1e1;"><i class="dd"></i></div>
<div class="c " style="left:1636px;top:523px;width:99px;height:19px;background-color:#fff;border-right-color:#e1e1e1;border-bottom-color:#e1e1e1;"><i class="dd"></i></div>
<div class="c " style="left:1734px;top:523px;width:119px;height:19px;background-color:#fff;border-right-color:#e1e1e1;border-bottom-color:#e1e1e1;"><i class="dd"></i></div>
<div class="c " style="left:1852px;top:523px;width:24px;height:19px;background-color:#fff;border-right-color:#e1e1e1;border-bottom-color:#e1e1e1;"></div>
<div class="c " style="left:299px;top:541px;width:107px;height:19px;background-color:#f3f3f3;border-right-color:#d7d7d7;border-bottom-color:#d7d7d7;"><i class="dd"></i></div>
<div class="c " style="left:405px;top:541px;width:94px;height:19px;background-color:#f3f3f3;border-right-color:#d7d7d7;border-bottom-color:#d7d7d7;"><i class="dd"></i></div>
<div class="c " style="left:498px;top:541px;width:99px;height:19px;background-color:#f3f3f3;border-right-color:#d7d7d7;border-bottom-color:#d7d7d7;"><i class="dd"></i></div>
<div class="c " style="left:596px;top:541px;width:93px;height:19px;background-color:#f3f3f3;border-right-color:#d7d7d7;border-bottom-color:#d7d7d7;"><i class="dd"></i></div>
<div class="c " style="left:688px;top:541px;width:94px;height:19px;background-color:#f3f3f3;border-right-color:#d7d7d7;border-bottom-color:#d7d7d7;"><i class="dd"></i></div>
<div class="c " style="left:781px;top:541px;width:95px;height:19px;background-color:#f3f3f3;border-right-color:#d7d7d7;border-bottom-color:#d7d7d7;"><i class="dd"></i></div>
<div class="c " style="left:875px;top:541px;width:92px;height:19px;background-color:#f3f3f3;border-right-color:#d7d7d7;border-bottom-color:#d7d7d7;"><i class="dd"></i></div>
<div class="c " style="left:966px;top:541px;width:124px;height:19px;background-color:#f3f3f3;border-right-color:#d7d7d7;border-bottom-color:#d7d7d7;"></div>
<div class="c " style="left:1089px;top:541px;width:85px;height:19px;background-color:#f3f3f3;border-right-color:#d7d7d7;border-bottom-color:#d7d7d7;"><i class="dd"></i></div>
<div class="c " style="left:1173px;top:541px;width:85px;height:19px;background-color:#f3f3f3;border-right-color:#d7d7d7;border-bottom-color:#d7d7d7;"><i class="dd"></i></div>
<div class="c " style="left:1257px;top:541px;width:85px;height:19px;background-color:#f3f3f3;border-right-color:#d7d7d7;border-bottom-color:#d7d7d7;"></div>
<div class="c " style="left:1341px;top:541px;width:95px;height:19px;background-color:#f3f3f3;border-right-color:#d7d7d7;border-bottom-color:#d7d7d7;"><i class="dd"></i></div>
<div class="c " style="left:1435px;top:541px;width:103px;height:19px;background-color:#f3f3f3;border-right-color:#d7d7d7;border-bottom-color:#d7d7d7;"><i class="dd"></i></div>
<div class="c " style="left:1537px;top:541px;width:100px;height:19px;background-color:#f3f3f3;border-right-color:#d7d7d7;border-bottom-color:#d7d7d7;"><i class="dd"></i></div>
<div class="c " style="left:1636px;top:541px;width:99px;height:19px;background-color:#f3f3f3;border-right-color:#d7d7d7;border-bottom-color:#d7d7d7;"><i class="dd"></i></div>
<div class="c " style="left:1734px;top:541px;width:119px;height:19px;background-color:#f3f3f3;border-right-color:#d7d7d7;border-bottom-color:#d7d7d7;"><i class="dd"></i></div>
<div class="c " style="left:1852px;top:541px;width:24px;height:19px;background-color:#f3f3f3;border-right-color:#d7d7d7;border-bottom-color:#d7d7d7;"></div>
<div class="c " style="left:299px;top:559px;width:107px;height:19px;background-color:#fff;border-right-color:#e1e1e1;border-bottom-color:#e1e1e1;"><i class="dd"></i></div>
<div class="c " style="left:405px;top:559px;width:94px;height:19px;background-color:#fff;border-right-color:#e1e1e1;border-bottom-color:#e1e1e1;"><i class="dd"></i></div>
<div class="c " style="left:498px;top:559px;width:99px;height:19px;background-color:#fff;border-right-color:#e1e1e1;border-bottom-color:#e1e1e1;"><i class="dd"></i></div>
<div class="c " style="left:596px;top:559px;width:93px;height:19px;background-color:#fff;border-right-color:#e1e1e1;border-bottom-color:#e1e1e1;"><i class="dd"></i></div>
<div class="c " style="left:688px;top:559px;width:94px;height:19px;background-color:#fff;border-right-color:#e1e1e1;border-bottom-color:#e1e1e1;"><i class="dd"></i></div>
<div class="c " style="left:781px;top:559px;width:95px;height:19px;background-color:#fff;border-right-color:#e1e1e1;border-bottom-color:#e1e1e1;"><i class="dd"></i></div>
<div class="c " style="left:875px;top:559px;width:92px;height:19px;background-color:#fff;border-right-color:#e1e1e1;border-bottom-color:#e1e1e1;"><i class="dd"></i></div>
<div class="c " style="left:966px;top:559px;width:124px;height:19px;background-color:#fff;border-right-color:#e1e1e1;border-bottom-color:#e1e1e1;"></div>
<div class="c " style="left:1089px;top:559px;width:85px;height:19px;background-color:#fff;border-right-color:#e1e1e1;border-bottom-color:#e1e1e1;"><i class="dd"></i></div>
<div class="c " style="left:1173px;top:559px;width:85px;height:19px;background-color:#fff;border-right-color:#e1e1e1;border-bottom-color:#e1e1e1;"><i class="dd"></i></div>
<div class="c " style="left:1257px;top:559px;width:85px;height:19px;background-color:#fff;border-right-color:#e1e1e1;border-bottom-color:#e1e1e1;"></div>
<div class="c " style="left:1341px;top:559px;width:95px;height:19px;background-color:#fff;border-right-color:#e1e1e1;border-bottom-color:#e1e1e1;"><i class="dd"></i></div>
<div class="c " style="left:1435px;top:559px;width:103px;height:19px;background-color:#fff;border-right-color:#e1e1e1;border-bottom-color:#e1e1e1;"><i class="dd"></i></div>
<div class="c " style="left:1537px;top:559px;width:100px;height:19px;background-color:#fff;border-right-color:#e1e1e1;border-bottom-color:#e1e1e1;"><i class="dd"></i></div>
<div class="c " style="left:1636px;top:559px;width:99px;height:19px;background-color:#fff;border-right-color:#e1e1e1;border-bottom-color:#e1e1e1;"><i class="dd"></i></div>
<div class="c " style="left:1734px;top:559px;width:119px;height:19px;background-color:#fff;border-right-color:#e1e1e1;border-bottom-color:#e1e1e1;"><i class="dd"></i></div>
<div class="c " style="left:1852px;top:559px;width:24px;height:19px;background-color:#fff;border-right-color:#e1e1e1;border-bottom-color:#e1e1e1;"></div>
<div class="c " style="left:299px;top:577px;width:107px;height:22px;background-color:#f3f3f3;border-right-color:#d7d7d7;border-bottom-color:#d7d7d7;"><i class="dd"></i></div>
<div class="c " style="left:405px;top:577px;width:94px;height:22px;background-color:#f3f3f3;border-right-color:#d7d7d7;border-bottom-color:#d7d7d7;"><i class="dd"></i></div>
<div class="c " style="left:498px;top:577px;width:99px;height:22px;background-color:#f3f3f3;border-right-color:#d7d7d7;border-bottom-color:#d7d7d7;"><i class="dd"></i></div>
<div class="c " style="left:596px;top:577px;width:93px;height:22px;background-color:#f3f3f3;border-right-color:#d7d7d7;border-bottom-color:#d7d7d7;"><i class="dd"></i></div>
<div class="c " style="left:688px;top:577px;width:94px;height:22px;background-color:#f3f3f3;border-right-color:#d7d7d7;border-bottom-color:#d7d7d7;"><i class="dd"></i></div>
<div class="c " style="left:781px;top:577px;width:95px;height:22px;background-color:#f3f3f3;border-right-color:#d7d7d7;border-bottom-color:#d7d7d7;"><i class="dd"></i></div>
<div class="c " style="left:875px;top:577px;width:92px;height:22px;background-color:#f3f3f3;border-right-color:#d7d7d7;border-bottom-color:#d7d7d7;"><i class="dd"></i></div>
<div class="c " style="left:966px;top:577px;width:124px;height:22px;background-color:#f3f3f3;border-right-color:#d7d7d7;border-bottom-color:#d7d7d7;"></div>
<div class="c " style="left:1089px;top:577px;width:85px;height:22px;background-color:#f3f3f3;border-right-color:#d7d7d7;border-bottom-color:#d7d7d7;"><i class="dd"></i></div>
<div class="c " style="left:1173px;top:577px;width:85px;height:22px;background-color:#f3f3f3;border-right-color:#d7d7d7;border-bottom-color:#d7d7d7;"><i class="dd"></i></div>
<div class="c " style="left:1257px;top:577px;width:85px;height:22px;background-color:#f3f3f3;border-right-color:#d7d7d7;border-bottom-color:#d7d7d7;"></div>
<div class="c " style="left:1341px;top:577px;width:95px;height:22px;background-color:#f3f3f3;border-right-color:#d7d7d7;border-bottom-color:#d7d7d7;"><i class="dd"></i></div>
<div class="c " style="left:1435px;top:577px;width:103px;height:22px;background-color:#f3f3f3;border-right-color:#d7d7d7;border-bottom-color:#d7d7d7;"><i class="dd"></i></div>
<div class="c " style="left:1537px;top:577px;width:100px;height:22px;background-color:#f3f3f3;border-right-color:#d7d7d7;border-bottom-color:#d7d7d7;"><i class="dd"></i></div>
<div class="c " style="left:1636px;top:577px;width:99px;height:22px;background-color:#f3f3f3;border-right-color:#d7d7d7;border-bottom-color:#d7d7d7;"><i class="dd"></i></div>
<div class="c " style="left:1734px;top:577px;width:119px;height:22px;background-color:#f3f3f3;border-right-color:#d7d7d7;border-bottom-color:#d7d7d7;"><i class="dd"></i></div>
<div class="c " style="left:1852px;top:577px;width:24px;height:22px;background-color:#f3f3f3;border-right-color:#d7d7d7;border-bottom-color:#d7d7d7;"></div>
<div class="c " style="left:299px;top:598px;width:107px;height:19px;background-color:#fff;border-right-color:#e1e1e1;border-bottom-color:#e1e1e1;"><i class="dd"></i></div>
<div class="c " style="left:405px;top:598px;width:94px;height:19px;background-color:#fff;border-right-color:#e1e1e1;border-bottom-color:#e1e1e1;"><i class="dd"></i></div>
<div class="c " style="left:498px;top:598px;width:99px;height:19px;background-color:#fff;border-right-color:#e1e1e1;border-bottom-color:#e1e1e1;"><i class="dd"></i></div>
<div class="c " style="left:596px;top:598px;width:93px;height:19px;background-color:#fff;border-right-color:#e1e1e1;border-bottom-color:#e1e1e1;"><i class="dd"></i></div>
<div class="c " style="left:688px;top:598px;width:94px;height:19px;background-color:#fff;border-right-color:#e1e1e1;border-bottom-color:#e1e1e1;"><i class="dd"></i></div>
<div class="c " style="left:781px;top:598px;width:95px;height:19px;background-color:#fff;border-right-color:#e1e1e1;border-bottom-color:#e1e1e1;"><i class="dd"></i></div>
<div class="c " style="left:875px;top:598px;width:92px;height:19px;background-color:#fff;border-right-color:#e1e1e1;border-bottom-color:#e1e1e1;"><i class="dd"></i></div>
<div class="c " style="left:966px;top:598px;width:124px;height:19px;background-color:#fff;border-right-color:#e1e1e1;border-bottom-color:#e1e1e1;"></div>
<div class="c " style="left:1089px;top:598px;width:85px;height:19px;background-color:#fff;border-right-color:#e1e1e1;border-bottom-color:#e1e1e1;"><i class="dd"></i></div>
<div class="c " style="left:1173px;top:598px;width:85px;height:19px;background-color:#fff;border-right-color:#e1e1e1;border-bottom-color:#e1e1e1;"><i class="dd"></i></div>
<div class="c " style="left:1257px;top:598px;width:85px;height:19px;background-color:#fff;border-right-color:#e1e1e1;border-bottom-color:#e1e1e1;"></div>
<div class="c " style="left:1341px;top:598px;width:95px;height:19px;background-color:#fff;border-right-color:#e1e1e1;border-bottom-color:#e1e1e1;"><i class="dd"></i></div>
<div class="c " style="left:1435px;top:598px;width:103px;height:19px;background-color:#fff;border-right-color:#e1e1e1;border-bottom-color:#e1e1e1;"><i class="dd"></i></div>
<div class="c " style="left:1537px;top:598px;width:100px;height:19px;background-color:#fff;border-right-color:#e1e1e1;border-bottom-color:#e1e1e1;"><i class="dd"></i></div>
<div class="c " style="left:1636px;top:598px;width:99px;height:19px;background-color:#fff;border-right-color:#e1e1e1;border-bottom-color:#e1e1e1;"><i class="dd"></i></div>
<div class="c " style="left:1734px;top:598px;width:119px;height:19px;background-color:#fff;border-right-color:#e1e1e1;border-bottom-color:#e1e1e1;"><i class="dd"></i></div>
<div class="c " style="left:1852px;top:598px;width:24px;height:19px;background-color:#fff;border-right-color:#e1e1e1;border-bottom-color:#e1e1e1;"></div>
<div class="c " style="left:299px;top:616px;width:107px;height:19px;background-color:#f3f3f3;border-right-color:#d7d7d7;border-bottom-color:#d7d7d7;"><i class="dd"></i></div>
<div class="c " style="left:405px;top:616px;width:94px;height:19px;background-color:#f3f3f3;border-right-color:#d7d7d7;border-bottom-color:#d7d7d7;"><i class="dd"></i></div>
<div class="c " style="left:498px;top:616px;width:99px;height:19px;background-color:#f3f3f3;border-right-color:#d7d7d7;border-bottom-color:#d7d7d7;"><i class="dd"></i></div>
<div class="c " style="left:596px;top:616px;width:93px;height:19px;background-color:#f3f3f3;border-right-color:#d7d7d7;border-bottom-color:#d7d7d7;"><i class="dd"></i></div>
<div class="c " style="left:688px;top:616px;width:94px;height:19px;background-color:#f3f3f3;border-right-color:#d7d7d7;border-bottom-color:#d7d7d7;"><i class="dd"></i></div>
<div class="c " style="left:781px;top:616px;width:95px;height:19px;background-color:#f3f3f3;border-right-color:#d7d7d7;border-bottom-color:#d7d7d7;"><i class="dd"></i></div>
<div class="c " style="left:875px;top:616px;width:92px;height:19px;background-color:#f3f3f3;border-right-color:#d7d7d7;border-bottom-color:#d7d7d7;"><i class="dd"></i></div>
<div class="c " style="left:966px;top:616px;width:124px;height:19px;background-color:#f3f3f3;border-right-color:#d7d7d7;border-bottom-color:#d7d7d7;"></div>
<div class="c " style="left:1089px;top:616px;width:85px;height:19px;background-color:#f3f3f3;border-right-color:#d7d7d7;border-bottom-color:#d7d7d7;"><i class="dd"></i></div>
<div class="c " style="left:1173px;top:616px;width:85px;height:19px;background-color:#f3f3f3;border-right-color:#d7d7d7;border-bottom-color:#d7d7d7;"><i class="dd"></i></div>
<div class="c " style="left:1257px;top:616px;width:85px;height:19px;background-color:#f3f3f3;border-right-color:#d7d7d7;border-bottom-color:#d7d7d7;"></div>
<div class="c " style="left:1341px;top:616px;width:95px;height:19px;background-color:#f3f3f3;border-right-color:#d7d7d7;border-bottom-color:#d7d7d7;"><i class="dd"></i></div>
<div class="c " style="left:1435px;top:616px;width:103px;height:19px;background-color:#f3f3f3;border-right-color:#d7d7d7;border-bottom-color:#d7d7d7;"><i class="dd"></i></div>
<div class="c " style="left:1537px;top:616px;width:100px;height:19px;background-color:#f3f3f3;border-right-color:#d7d7d7;border-bottom-color:#d7d7d7;"><i class="dd"></i></div>
<div class="c " style="left:1636px;top:616px;width:99px;height:19px;background-color:#f3f3f3;border-right-color:#d7d7d7;border-bottom-color:#d7d7d7;"><i class="dd"></i></div>
<div class="c " style="left:1734px;top:616px;width:119px;height:19px;background-color:#f3f3f3;border-right-color:#d7d7d7;border-bottom-color:#d7d7d7;"><i class="dd"></i></div>
<div class="c " style="left:1852px;top:616px;width:24px;height:19px;background-color:#f3f3f3;border-right-color:#d7d7d7;border-bottom-color:#d7d7d7;"></div>
<div class="c " style="left:299px;top:634px;width:107px;height:19px;background-color:#fff;border-right-color:#e1e1e1;border-bottom-color:#e1e1e1;"><i class="dd"></i></div>
<div class="c " style="left:405px;top:634px;width:94px;height:19px;background-color:#fff;border-right-color:#e1e1e1;border-bottom-color:#e1e1e1;"><i class="dd"></i></div>
<div class="c " style="left:498px;top:634px;width:99px;height:19px;background-color:#fff;border-right-color:#e1e1e1;border-bottom-color:#e1e1e1;"><i class="dd"></i></div>
<div class="c " style="left:596px;top:634px;width:93px;height:19px;background-color:#fff;border-right-color:#e1e1e1;border-bottom-color:#e1e1e1;"><i class="dd"></i></div>
<div class="c " style="left:688px;top:634px;width:94px;height:19px;background-color:#fff;border-right-color:#e1e1e1;border-bottom-color:#e1e1e1;"><i class="dd"></i></div>
<div class="c " style="left:781px;top:634px;width:95px;height:19px;background-color:#fff;border-right-color:#e1e1e1;border-bottom-color:#e1e1e1;"><i class="dd"></i></div>
<div class="c " style="left:875px;top:634px;width:92px;height:19px;background-color:#fff;border-right-color:#e1e1e1;border-bottom-color:#e1e1e1;"><i class="dd"></i></div>
<div class="c " style="left:966px;top:634px;width:124px;height:19px;background-color:#fff;border-right-color:#e1e1e1;border-bottom-color:#e1e1e1;"></div>
<div class="c " style="left:1089px;top:634px;width:85px;height:19px;background-color:#fff;border-right-color:#e1e1e1;border-bottom-color:#e1e1e1;"><i class="dd"></i></div>
<div class="c " style="left:1173px;top:634px;width:85px;height:19px;background-color:#fff;border-right-color:#e1e1e1;border-bottom-color:#e1e1e1;"><i class="dd"></i></div>
<div class="c " style="left:1257px;top:634px;width:85px;height:19px;background-color:#fff;border-right-color:#e1e1e1;border-bottom-color:#e1e1e1;"></div>
<div class="c " style="left:1341px;top:634px;width:95px;height:19px;background-color:#fff;border-right-color:#e1e1e1;border-bottom-color:#e1e1e1;"><i class="dd"></i></div>
<div class="c " style="left:1435px;top:634px;width:103px;height:19px;background-color:#fff;border-right-color:#e1e1e1;border-bottom-color:#e1e1e1;"><i class="dd"></i></div>
<div class="c " style="left:1537px;top:634px;width:100px;height:19px;background-color:#fff;border-right-color:#e1e1e1;border-bottom-color:#e1e1e1;"><i class="dd"></i></div>
<div class="c " style="left:1636px;top:634px;width:99px;height:19px;background-color:#fff;border-right-color:#e1e1e1;border-bottom-color:#e1e1e1;"><i class="dd"></i></div>
<div class="c " style="left:1734px;top:634px;width:119px;height:19px;background-color:#fff;border-right-color:#e1e1e1;border-bottom-color:#e1e1e1;"><i class="dd"></i></div>
<div class="c " style="left:1852px;top:634px;width:24px;height:19px;background-color:#fff;border-right-color:#e1e1e1;border-bottom-color:#e1e1e1;"></div>
<div class="c " style="left:299px;top:652px;width:107px;height:85px;background-color:#f3f3f3;border-right-color:#d7d7d7;border-bottom-color:#d7d7d7;"><i class="dd"></i><i class="nt"></i></div>
<div class="c " style="left:405px;top:652px;width:94px;height:85px;background-color:#f3f3f3;border-right-color:#d7d7d7;border-bottom-color:#d7d7d7;"><div class="t hc vb" style="padding-right:18px;"><span>є відповіді на<br>різні питання<br>(відповіли до<br>1 год.)</span></div><i class="dd"></i><i class="nt"></i></div>
<div class="c " style="left:498px;top:652px;width:99px;height:85px;background-color:#f3f3f3;border-right-color:#d7d7d7;border-bottom-color:#d7d7d7;"><div class="t hc vb" style="padding-right:18px;"><span>є, відповіли<br>протягом<br>години</span></div><i class="dd"></i><i class="nt"></i></div>
<div class="c " style="left:596px;top:652px;width:93px;height:85px;background-color:#f3f3f3;border-right-color:#d7d7d7;border-bottom-color:#d7d7d7;"><div class="t hl vb" style="padding-right:16px;"><span>є</span></div><i class="dd"></i><i class="nt"></i></div>
<div class="c " style="left:688px;top:652px;width:94px;height:85px;background-color:#f3f3f3;border-right-color:#d7d7d7;border-bottom-color:#d7d7d7;"><div class="t hl vb" style="padding-right:16px;"><span>є</span></div><i class="dd"></i><i class="nt"></i></div>
<div class="c " style="left:781px;top:652px;width:95px;height:85px;background-color:#f3f3f3;border-right-color:#d7d7d7;border-bottom-color:#d7d7d7;"><div class="t hl vb" style="padding-right:16px;"><span>є</span></div><i class="dd"></i><i class="nt"></i></div>
<div class="c " style="left:875px;top:652px;width:92px;height:85px;background-color:#f3f3f3;border-right-color:#d7d7d7;border-bottom-color:#d7d7d7;"><div class="t hl vb" style="padding-right:16px;"><span>є</span></div><i class="dd"></i><i class="nt"></i></div>
<div class="c " style="left:966px;top:652px;width:124px;height:85px;background-color:#f3f3f3;border-right-color:#d7d7d7;border-bottom-color:#d7d7d7;"></div>
<div class="c " style="left:1089px;top:652px;width:85px;height:85px;background-color:#f3f3f3;border-right-color:#d7d7d7;border-bottom-color:#d7d7d7;"><div class="t hl vb" style="padding-right:16px;"><span>є, але<br>приховано</span></div><i class="dd"></i><i class="nt"></i></div>
<div class="c " style="left:1173px;top:652px;width:85px;height:85px;background-color:#f3f3f3;border-right-color:#d7d7d7;border-bottom-color:#d7d7d7;"><div class="t hl vb" style="padding-right:16px;"><span>немає</span></div><i class="dd"></i><i class="nt"></i></div>
<div class="c " style="left:1257px;top:652px;width:85px;height:85px;background-color:#fff;border-right-color:#e1e1e1;border-bottom-color:#e1e1e1;"><div class="t hl vb" style=""><span>від 0,9%</span></div></div>
<div class="c " style="left:1341px;top:652px;width:95px;height:85px;background-color:#f3f3f3;border-right-color:#d7d7d7;border-bottom-color:#d7d7d7;"><div class="t hl vb" style="padding-right:16px;"><span>є</span></div><i class="dd"></i><i class="nt"></i></div>
<div class="c " style="left:1435px;top:652px;width:103px;height:85px;background-color:#f3f3f3;border-right-color:#d7d7d7;border-bottom-color:#d7d7d7;"><div class="t hl vb" style="padding-right:16px;"><span>є</span></div><i class="dd"></i><i class="nt"></i></div>
<div class="c " style="left:1537px;top:652px;width:100px;height:85px;background-color:#f3f3f3;border-right-color:#d7d7d7;border-bottom-color:#d7d7d7;"><div class="t hl vb" style="padding-right:16px;"><span>є</span></div><i class="dd"></i><i class="nt"></i></div>
<div class="c " style="left:1636px;top:652px;width:99px;height:85px;background-color:#f3f3f3;border-right-color:#d7d7d7;border-bottom-color:#d7d7d7;"><div class="t hl vb" style="padding-right:16px;"><span>є</span></div><i class="dd"></i><i class="nt"></i></div>
<div class="c " style="left:1734px;top:652px;width:119px;height:85px;background-color:#f3f3f3;border-right-color:#d7d7d7;border-bottom-color:#d7d7d7;"><div class="t hl vb" style="padding-right:16px;"><span>є</span></div><i class="dd"></i><i class="nt"></i></div>
<div class="c " style="left:1852px;top:652px;width:24px;height:85px;background-color:#f3f3f3;border-right-color:#d7d7d7;border-bottom-color:#d7d7d7;"></div>
<div class="c " style="left:299px;top:736px;width:107px;height:19px;background-color:#fff;border-right-color:#e1e1e1;border-bottom-color:#e1e1e1;"><i class="dd"></i></div>
<div class="c " style="left:405px;top:736px;width:94px;height:19px;background-color:#fff;border-right-color:#e1e1e1;border-bottom-color:#e1e1e1;"><i class="dd"></i></div>
<div class="c " style="left:498px;top:736px;width:99px;height:19px;background-color:#fff;border-right-color:#e1e1e1;border-bottom-color:#e1e1e1;"><i class="dd"></i></div>
<div class="c " style="left:596px;top:736px;width:93px;height:19px;background-color:#fff;border-right-color:#e1e1e1;border-bottom-color:#e1e1e1;"><i class="dd"></i></div>
<div class="c " style="left:688px;top:736px;width:94px;height:19px;background-color:#fff;border-right-color:#e1e1e1;border-bottom-color:#e1e1e1;"><i class="dd"></i></div>
<div class="c " style="left:781px;top:736px;width:95px;height:19px;background-color:#fff;border-right-color:#e1e1e1;border-bottom-color:#e1e1e1;"><i class="dd"></i></div>
<div class="c " style="left:875px;top:736px;width:92px;height:19px;background-color:#fff;border-right-color:#e1e1e1;border-bottom-color:#e1e1e1;"><i class="dd"></i></div>
<div class="c " style="left:966px;top:736px;width:124px;height:19px;background-color:#fff;border-right-color:#e1e1e1;border-bottom-color:#e1e1e1;"></div>
<div class="c " style="left:1089px;top:736px;width:85px;height:19px;background-color:#fff;border-right-color:#e1e1e1;border-bottom-color:#e1e1e1;"><i class="dd"></i></div>
<div class="c " style="left:1173px;top:736px;width:85px;height:19px;background-color:#fff;border-right-color:#e1e1e1;border-bottom-color:#e1e1e1;"><i class="dd"></i></div>
<div class="c " style="left:1257px;top:736px;width:85px;height:19px;background-color:#fff;border-right-color:#e1e1e1;border-bottom-color:#e1e1e1;"></div>
<div class="c " style="left:1341px;top:736px;width:95px;height:19px;background-color:#fff;border-right-color:#e1e1e1;border-bottom-color:#e1e1e1;"><i class="dd"></i></div>
<div class="c " style="left:1435px;top:736px;width:103px;height:19px;background-color:#fff;border-right-color:#e1e1e1;border-bottom-color:#e1e1e1;"><i class="dd"></i></div>
<div class="c " style="left:1537px;top:736px;width:100px;height:19px;background-color:#fff;border-right-color:#e1e1e1;border-bottom-color:#e1e1e1;"><i class="dd"></i></div>
<div class="c " style="left:1636px;top:736px;width:99px;height:19px;background-color:#fff;border-right-color:#e1e1e1;border-bottom-color:#e1e1e1;"><i class="dd"></i></div>
<div class="c " style="left:1734px;top:736px;width:119px;height:19px;background-color:#fff;border-right-color:#e1e1e1;border-bottom-color:#e1e1e1;"><i class="dd"></i></div>
<div class="c " style="left:1852px;top:736px;width:24px;height:19px;background-color:#fff;border-right-color:#e1e1e1;border-bottom-color:#e1e1e1;"></div>
<div class="c " style="left:299px;top:754px;width:107px;height:19px;background-color:#f3f3f3;border-right-color:#d7d7d7;border-bottom-color:#d7d7d7;"><i class="dd"></i></div>
<div class="c " style="left:405px;top:754px;width:94px;height:19px;background-color:#f3f3f3;border-right-color:#d7d7d7;border-bottom-color:#d7d7d7;"><i class="dd"></i></div>
<div class="c " style="left:498px;top:754px;width:99px;height:19px;background-color:#f3f3f3;border-right-color:#d7d7d7;border-bottom-color:#d7d7d7;"><i class="dd"></i></div>
<div class="c " style="left:596px;top:754px;width:93px;height:19px;background-color:#f3f3f3;border-right-color:#d7d7d7;border-bottom-color:#d7d7d7;"><i class="dd"></i></div>
<div class="c " style="left:688px;top:754px;width:94px;height:19px;background-color:#f3f3f3;border-right-color:#d7d7d7;border-bottom-color:#d7d7d7;"><i class="dd"></i></div>
<div class="c " style="left:781px;top:754px;width:95px;height:19px;background-color:#f3f3f3;border-right-color:#d7d7d7;border-bottom-color:#d7d7d7;"><i class="dd"></i></div>
<div class="c " style="left:875px;top:754px;width:92px;height:19px;background-color:#f3f3f3;border-right-color:#d7d7d7;border-bottom-color:#d7d7d7;"><i class="dd"></i></div>
<div class="c " style="left:966px;top:754px;width:124px;height:19px;background-color:#f3f3f3;border-right-color:#d7d7d7;border-bottom-color:#d7d7d7;"></div>
<div class="c " style="left:1089px;top:754px;width:85px;height:19px;background-color:#f3f3f3;border-right-color:#d7d7d7;border-bottom-color:#d7d7d7;"><i class="dd"></i></div>
<div class="c " style="left:1173px;top:754px;width:85px;height:19px;background-color:#f3f3f3;border-right-color:#d7d7d7;border-bottom-color:#d7d7d7;"><i class="dd"></i></div>
<div class="c " style="left:1257px;top:754px;width:85px;height:19px;background-color:#f3f3f3;border-right-color:#d7d7d7;border-bottom-color:#d7d7d7;"></div>
<div class="c " style="left:1341px;top:754px;width:95px;height:19px;background-color:#f3f3f3;border-right-color:#d7d7d7;border-bottom-color:#d7d7d7;"><i class="dd"></i></div>
<div class="c " style="left:1435px;top:754px;width:103px;height:19px;background-color:#f3f3f3;border-right-color:#d7d7d7;border-bottom-color:#d7d7d7;"><i class="dd"></i></div>
<div class="c " style="left:1537px;top:754px;width:100px;height:19px;background-color:#f3f3f3;border-right-color:#d7d7d7;border-bottom-color:#d7d7d7;"><i class="dd"></i></div>
<div class="c " style="left:1636px;top:754px;width:99px;height:19px;background-color:#f3f3f3;border-right-color:#d7d7d7;border-bottom-color:#d7d7d7;"><i class="dd"></i></div>
<div class="c " style="left:1734px;top:754px;width:119px;height:19px;background-color:#f3f3f3;border-right-color:#d7d7d7;border-bottom-color:#d7d7d7;"><i class="dd"></i></div>
<div class="c " style="left:1852px;top:754px;width:24px;height:19px;background-color:#f3f3f3;border-right-color:#d7d7d7;border-bottom-color:#d7d7d7;"></div>
<div class="c " style="left:299px;top:772px;width:107px;height:59px;background-color:#fff;border-right-color:#e1e1e1;border-bottom-color:#e1e1e1;"><i class="dd"></i><i class="nt"></i></div>
<div class="c " style="left:405px;top:772px;width:94px;height:59px;background-color:#fff;border-right-color:#e1e1e1;border-bottom-color:#e1e1e1;"><div class="t hc vb" style="padding-right:18px;"><span>є відповіді на<br>різні питання<br>(відповіли до<br>1 год.)</span></div><i class="dd"></i><i class="nt"></i></div>
<div class="c " style="left:498px;top:772px;width:99px;height:59px;background-color:#fff;border-right-color:#e1e1e1;border-bottom-color:#e1e1e1;"><div class="t hc vb" style="padding-right:18px;"><span>є, відповіли<br>протягом<br>години</span></div><i class="dd"></i><i class="nt"></i></div>
<div class="c " style="left:596px;top:772px;width:93px;height:59px;background-color:#fff;border-right-color:#e1e1e1;border-bottom-color:#e1e1e1;"><div class="t hl vb" style="padding-right:16px;"><span>немає</span></div><i class="dd"></i></div>
<div class="c " style="left:688px;top:772px;width:94px;height:59px;background-color:#fff;border-right-color:#e1e1e1;border-bottom-color:#e1e1e1;"><div class="t hl vb" style="padding-right:16px;"><span>є</span></div><i class="dd"></i><i class="nt"></i></div>
<div class="c " style="left:781px;top:772px;width:95px;height:59px;background-color:#fff;border-right-color:#e1e1e1;border-bottom-color:#e1e1e1;"><div class="t hl vb" style="padding-right:16px;"><span>є</span></div><i class="dd"></i><i class="nt"></i></div>
<div class="c " style="left:875px;top:772px;width:92px;height:59px;background-color:#fff;border-right-color:#e1e1e1;border-bottom-color:#e1e1e1;"><div class="t hl vb" style="padding-right:16px;"><span>є</span></div><i class="dd"></i><i class="nt"></i></div>
<div class="c " style="left:966px;top:772px;width:124px;height:59px;background-color:#fff;border-right-color:#e1e1e1;border-bottom-color:#e1e1e1;"></div>
<div class="c " style="left:1089px;top:772px;width:85px;height:59px;background-color:#fff;border-right-color:#e1e1e1;border-bottom-color:#e1e1e1;"><div class="t hl vb" style="padding-right:16px;"><span>є</span></div><i class="dd"></i><i class="nt"></i></div>
<div class="c " style="left:1173px;top:772px;width:85px;height:59px;background-color:#fff;border-right-color:#e1e1e1;border-bottom-color:#e1e1e1;"><div class="t hl vb" style="padding-right:16px;"><span>є, але<br>приховано</span></div><i class="dd"></i><i class="nt"></i></div>
<div class="c " style="left:1257px;top:772px;width:85px;height:59px;background-color:#fff;border-right-color:#e1e1e1;border-bottom-color:#e1e1e1;"><div class="t hr vb" style=""><span>0,01%</span></div></div>
<div class="c " style="left:1341px;top:772px;width:95px;height:59px;background-color:#fff;border-right-color:#e1e1e1;border-bottom-color:#e1e1e1;"><div class="t hl vb" style="padding-right:16px;"><span>є</span></div><i class="dd"></i><i class="nt"></i></div>
<div class="c " style="left:1435px;top:772px;width:103px;height:59px;background-color:#fff;border-right-color:#e1e1e1;border-bottom-color:#e1e1e1;"><div class="t hl vb" style="padding-right:16px;"><span>є</span></div><i class="dd"></i><i class="nt"></i></div>
<div class="c " style="left:1537px;top:772px;width:100px;height:59px;background-color:#fff;border-right-color:#e1e1e1;border-bottom-color:#e1e1e1;"><div class="t hl vb" style="padding-right:16px;"><span>є</span></div><i class="dd"></i><i class="nt"></i></div>
<div class="c " style="left:1636px;top:772px;width:99px;height:59px;background-color:#fff;border-right-color:#e1e1e1;border-bottom-color:#e1e1e1;"><div class="t hl vb" style="padding-right:16px;"><span>є</span></div><i class="dd"></i><i class="nt"></i></div>
<div class="c " style="left:1734px;top:772px;width:119px;height:59px;background-color:#fff;border-right-color:#e1e1e1;border-bottom-color:#e1e1e1;"><div class="t hl vb" style="padding-right:16px;"><span>є</span></div><i class="dd"></i><i class="nt"></i></div>
<div class="c " style="left:1852px;top:772px;width:24px;height:59px;background-color:#fff;border-right-color:#e1e1e1;border-bottom-color:#e1e1e1;"></div>
<div class="c " style="left:299px;top:830px;width:107px;height:19px;background-color:#f3f3f3;border-right-color:#d7d7d7;border-bottom-color:#d7d7d7;"><i class="dd"></i></div>
<div class="c " style="left:405px;top:830px;width:94px;height:19px;background-color:#f3f3f3;border-right-color:#d7d7d7;border-bottom-color:#d7d7d7;"><i class="dd"></i></div>
<div class="c " style="left:498px;top:830px;width:99px;height:19px;background-color:#f3f3f3;border-right-color:#d7d7d7;border-bottom-color:#d7d7d7;"><i class="dd"></i></div>
<div class="c " style="left:596px;top:830px;width:93px;height:19px;background-color:#f3f3f3;border-right-color:#d7d7d7;border-bottom-color:#d7d7d7;"><i class="dd"></i></div>
<div class="c " style="left:688px;top:830px;width:94px;height:19px;background-color:#f3f3f3;border-right-color:#d7d7d7;border-bottom-color:#d7d7d7;"><i class="dd"></i></div>
<div class="c " style="left:781px;top:830px;width:95px;height:19px;background-color:#f3f3f3;border-right-color:#d7d7d7;border-bottom-color:#d7d7d7;"><i class="dd"></i></div>
<div class="c " style="left:875px;top:830px;width:92px;height:19px;background-color:#f3f3f3;border-right-color:#d7d7d7;border-bottom-color:#d7d7d7;"><i class="dd"></i></div>
<div class="c " style="left:966px;top:830px;width:124px;height:19px;background-color:#f3f3f3;border-right-color:#d7d7d7;border-bottom-color:#d7d7d7;"></div>
<div class="c " style="left:1089px;top:830px;width:85px;height:19px;background-color:#f3f3f3;border-right-color:#d7d7d7;border-bottom-color:#d7d7d7;"><i class="dd"></i></div>
<div class="c " style="left:1173px;top:830px;width:85px;height:19px;background-color:#f3f3f3;border-right-color:#d7d7d7;border-bottom-color:#d7d7d7;"><i class="dd"></i></div>
<div class="c " style="left:1257px;top:830px;width:85px;height:19px;background-color:#f3f3f3;border-right-color:#d7d7d7;border-bottom-color:#d7d7d7;"></div>
<div class="c " style="left:1341px;top:830px;width:95px;height:19px;background-color:#f3f3f3;border-right-color:#d7d7d7;border-bottom-color:#d7d7d7;"><i class="dd"></i></div>
<div class="c " style="left:1435px;top:830px;width:103px;height:19px;background-color:#f3f3f3;border-right-color:#d7d7d7;border-bottom-color:#d7d7d7;"><i class="dd"></i></div>
<div class="c " style="left:1537px;top:830px;width:100px;height:19px;background-color:#f3f3f3;border-right-color:#d7d7d7;border-bottom-color:#d7d7d7;"><i class="dd"></i></div>
<div class="c " style="left:1636px;top:830px;width:99px;height:19px;background-color:#f3f3f3;border-right-color:#d7d7d7;border-bottom-color:#d7d7d7;"><i class="dd"></i></div>
<div class="c " style="left:1734px;top:830px;width:119px;height:19px;background-color:#f3f3f3;border-right-color:#d7d7d7;border-bottom-color:#d7d7d7;"><i class="dd"></i></div>
<div class="c " style="left:1852px;top:830px;width:24px;height:19px;background-color:#f3f3f3;border-right-color:#d7d7d7;border-bottom-color:#d7d7d7;"></div>
<div class="c " style="left:299px;top:848px;width:107px;height:19px;background-color:#fff;border-right-color:#e1e1e1;border-bottom-color:#e1e1e1;"><i class="dd"></i></div>
<div class="c " style="left:405px;top:848px;width:94px;height:19px;background-color:#fff;border-right-color:#e1e1e1;border-bottom-color:#e1e1e1;"><i class="dd"></i></div>
<div class="c " style="left:498px;top:848px;width:99px;height:19px;background-color:#fff;border-right-color:#e1e1e1;border-bottom-color:#e1e1e1;"><i class="dd"></i></div>
<div class="c " style="left:596px;top:848px;width:93px;height:19px;background-color:#fff;border-right-color:#e1e1e1;border-bottom-color:#e1e1e1;"><i class="dd"></i></div>
<div class="c " style="left:688px;top:848px;width:94px;height:19px;background-color:#fff;border-right-color:#e1e1e1;border-bottom-color:#e1e1e1;"><i class="dd"></i></div>
<div class="c " style="left:781px;top:848px;width:95px;height:19px;background-color:#fff;border-right-color:#e1e1e1;border-bottom-color:#e1e1e1;"><i class="dd"></i></div>
<div class="c " style="left:875px;top:848px;width:92px;height:19px;background-color:#fff;border-right-color:#e1e1e1;border-bottom-color:#e1e1e1;"><i class="dd"></i></div>
<div class="c " style="left:966px;top:848px;width:124px;height:19px;background-color:#fff;border-right-color:#e1e1e1;border-bottom-color:#e1e1e1;"></div>
<div class="c " style="left:1089px;top:848px;width:85px;height:19px;background-color:#fff;border-right-color:#e1e1e1;border-bottom-color:#e1e1e1;"><i class="dd"></i></div>
<div class="c " style="left:1173px;top:848px;width:85px;height:19px;background-color:#fff;border-right-color:#e1e1e1;border-bottom-color:#e1e1e1;"><i class="dd"></i></div>
<div class="c " style="left:1257px;top:848px;width:85px;height:19px;background-color:#fff;border-right-color:#e1e1e1;border-bottom-color:#e1e1e1;"></div>
<div class="c " style="left:1341px;top:848px;width:95px;height:19px;background-color:#fff;border-right-color:#e1e1e1;border-bottom-color:#e1e1e1;"><i class="dd"></i></div>
<div class="c " style="left:1435px;top:848px;width:103px;height:19px;background-color:#fff;border-right-color:#e1e1e1;border-bottom-color:#e1e1e1;"><i class="dd"></i></div>
<div class="c " style="left:1537px;top:848px;width:100px;height:19px;background-color:#fff;border-right-color:#e1e1e1;border-bottom-color:#e1e1e1;"><i class="dd"></i></div>
<div class="c " style="left:1636px;top:848px;width:99px;height:19px;background-color:#fff;border-right-color:#e1e1e1;border-bottom-color:#e1e1e1;"><i class="dd"></i></div>
<div class="c " style="left:1734px;top:848px;width:119px;height:19px;background-color:#fff;border-right-color:#e1e1e1;border-bottom-color:#e1e1e1;"><i class="dd"></i></div>
<div class="c " style="left:1852px;top:848px;width:24px;height:19px;background-color:#fff;border-right-color:#e1e1e1;border-bottom-color:#e1e1e1;"></div>
<div class="c " style="left:299px;top:866px;width:107px;height:147px;background-color:#f3f3f3;border-right-color:#d7d7d7;border-bottom-color:#d7d7d7;"><i class="dd"></i><i class="nt"></i></div>
<div class="c " style="left:405px;top:866px;width:94px;height:147px;background-color:#f3f3f3;border-right-color:#d7d7d7;border-bottom-color:#d7d7d7;"><i class="dd"></i><i class="nt"></i></div>
<div class="c " style="left:498px;top:866px;width:99px;height:147px;background-color:#f3f3f3;border-right-color:#d7d7d7;border-bottom-color:#d7d7d7;"><i class="dd"></i><i class="nt"></i></div>
<div class="c " style="left:596px;top:866px;width:93px;height:147px;background-color:#f3f3f3;border-right-color:#d7d7d7;border-bottom-color:#d7d7d7;"><i class="dd"></i><i class="nt"></i></div>
<div class="c " style="left:688px;top:866px;width:94px;height:147px;background-color:#f3f3f3;border-right-color:#d7d7d7;border-bottom-color:#d7d7d7;"><i class="dd"></i><i class="nt"></i></div>
<div class="c " style="left:781px;top:866px;width:95px;height:147px;background-color:#f3f3f3;border-right-color:#d7d7d7;border-bottom-color:#d7d7d7;"><i class="dd"></i><i class="nt"></i></div>
<div class="c " style="left:875px;top:866px;width:92px;height:147px;background-color:#f3f3f3;border-right-color:#d7d7d7;border-bottom-color:#d7d7d7;"><i class="dd"></i><i class="nt"></i></div>
<div class="c " style="left:966px;top:866px;width:124px;height:147px;background-color:#f3f3f3;border-right-color:#d7d7d7;border-bottom-color:#d7d7d7;"></div>
<div class="c " style="left:1089px;top:866px;width:85px;height:147px;background-color:#f3f3f3;border-right-color:#d7d7d7;border-bottom-color:#d7d7d7;"><i class="dd"></i><i class="nt"></i></div>
<div class="c " style="left:1173px;top:866px;width:85px;height:147px;background-color:#f3f3f3;border-right-color:#d7d7d7;border-bottom-color:#d7d7d7;"><i class="dd"></i><i class="nt"></i></div>
<div class="c " style="left:1257px;top:866px;width:85px;height:147px;background-color:#f3f3f3;border-right-color:#d7d7d7;border-bottom-color:#d7d7d7;"><i class="nt"></i></div>
<div class="c " style="left:1341px;top:866px;width:95px;height:147px;background-color:#f3f3f3;border-right-color:#d7d7d7;border-bottom-color:#d7d7d7;"><i class="dd"></i><i class="nt"></i></div>
<div class="c " style="left:1435px;top:866px;width:103px;height:147px;background-color:#f3f3f3;border-right-color:#d7d7d7;border-bottom-color:#d7d7d7;"><i class="dd"></i><i class="nt"></i></div>
<div class="c " style="left:1537px;top:866px;width:100px;height:147px;background-color:#f3f3f3;border-right-color:#d7d7d7;border-bottom-color:#d7d7d7;"><i class="dd"></i><i class="nt"></i></div>
<div class="c " style="left:1636px;top:866px;width:99px;height:147px;background-color:#f3f3f3;border-right-color:#d7d7d7;border-bottom-color:#d7d7d7;"><i class="dd"></i><i class="nt"></i></div>
<div class="c " style="left:1734px;top:866px;width:119px;height:147px;background-color:#f3f3f3;border-right-color:#d7d7d7;border-bottom-color:#d7d7d7;"><i class="dd"></i><i class="nt"></i></div>
<div class="c " style="left:1852px;top:866px;width:24px;height:147px;background-color:#f3f3f3;border-right-color:#d7d7d7;border-bottom-color:#d7d7d7;"></div>
<div class="c " style="left:1852px;top:353px;width:24px;height:19px;background-color:#ff0000;"><div class="t hl vb" style=""><span>x</span></div></div>
<div class="c " style="left:1852px;top:772px;width:24px;height:59px;background-color:#cfdde6;"></div>
<div class="c " style="left:405px;top:866px;width:94px;height:147px;"><div class="yl" style="left:6px;top:124px">є відповіді на</div></div>
<div class="c " style="left:34px;top:275px;width:24px;height:43px;background-color:#ff00ff;border-left-color:#ccc;border-right-color:#000;border-bottom-color:#000;"><div class="t hr vb" style=""><span>41</span></div></div>
<div class="c " style="left:57px;top:275px;width:97px;height:43px;background-color:#ffff00;border-right-color:#000;border-bottom-color:#000;"><div class="t hl vb" style=""><span><a>Ranok</a></span></div></div>
<div class="c " style="left:153px;top:275px;width:71px;height:43px;background-color:#fff;border-right-color:#000;border-bottom-color:#000;"></div>
<div class="c " style="left:223px;top:275px;width:74px;height:43px;background-color:#00ff00;border-right-color:#000;border-bottom-color:#000;"><div class="t hl vb" style=""><span>Влада</span></div></div>
<div class="c " style="left:34px;top:317px;width:24px;height:19px;background-color:#fff;border-left-color:#ccc;border-top-color:#000;border-right-color:#000;border-bottom-color:#000;"></div>
<div class="c " style="left:57px;top:317px;width:97px;height:19px;background-color:#f3f3f3;border-right-color:#000;border-bottom-color:#000;"><div class="t hl vb" style=""><span>дзвінок 2</span></div></div>
<div class="c " style="left:153px;top:317px;width:71px;height:19px;background-color:#fff;border-right-color:#000;border-bottom-color:#000;"></div>
<div class="c " style="left:223px;top:317px;width:74px;height:19px;background-color:#00ff00;border-right-color:#000;border-bottom-color:#000;"></div>
<div class="c " style="left:34px;top:335px;width:24px;height:19px;background-color:#fff;border-left-color:#ccc;border-top-color:#000;border-right-color:#000;border-bottom-color:#000;"></div>
<div class="c " style="left:57px;top:335px;width:97px;height:19px;background-color:#fff;border-right-color:#000;border-bottom-color:#000;"><div class="t hl vb" style=""><span>дзвінок 3</span></div></div>
<div class="c " style="left:153px;top:335px;width:71px;height:19px;background-color:#fff;border-right-color:#000;border-bottom-color:#000;"></div>
<div class="c " style="left:223px;top:335px;width:74px;height:19px;background-color:#00ff00;border-right-color:#000;border-bottom-color:#000;"></div>
<div class="c " style="left:34px;top:353px;width:24px;height:19px;background-color:#fff;border-left-color:#ccc;border-top-color:#000;border-right-color:#000;border-bottom-color:#000;"></div>
<div class="c " style="left:57px;top:353px;width:97px;height:19px;background-color:#ff0000;border-right-color:#000;border-bottom-color:#000;"><div class="t hl vb" style=""><span><a class="v">ТОП1</a></span></div><i class="nt"></i></div>
<div class="c " style="left:153px;top:353px;width:71px;height:19px;background-color:#ff0000;border-right-color:#000;border-bottom-color:#000;"></div>
<div class="c " style="left:223px;top:353px;width:74px;height:19px;background-color:#ff0000;border-right-color:#000;border-bottom-color:#000;"><div class="t hl vb" style=""><span>Катя Г.</span></div></div>
<div class="c " style="left:34px;top:371px;width:24px;height:19px;background-color:#fff;border-left-color:#ccc;border-top-color:#000;border-right-color:#000;border-bottom-color:#000;"></div>
<div class="c " style="left:57px;top:371px;width:97px;height:19px;background-color:#ff0000;border-right-color:#000;border-bottom-color:#000;"><div class="t hl vb" style=""><span>дзвінок 2</span></div></div>
<div class="c " style="left:153px;top:371px;width:71px;height:19px;background-color:#ff0000;border-right-color:#000;border-bottom-color:#000;"></div>
<div class="c " style="left:223px;top:371px;width:74px;height:19px;background-color:#ff0000;border-right-color:#000;border-bottom-color:#000;"></div>
<div class="c " style="left:34px;top:389px;width:24px;height:19px;background-color:#fff;border-left-color:#ccc;border-top-color:#000;border-right-color:#000;border-bottom-color:#000;"></div>
<div class="c " style="left:57px;top:389px;width:97px;height:19px;background-color:#ff0000;border-right-color:#000;border-bottom-color:#000;"><div class="t hl vb" style=""><span>дзвінок 3</span></div></div>
<div class="c " style="left:153px;top:389px;width:71px;height:19px;background-color:#ff0000;border-right-color:#000;border-bottom-color:#000;"></div>
<div class="c " style="left:223px;top:389px;width:74px;height:19px;background-color:#ff0000;border-right-color:#000;border-bottom-color:#000;"></div>
<div class="c " style="left:34px;top:407px;width:24px;height:99px;background-color:#ff00ff;border-left-color:#ccc;border-top-color:#000;border-right-color:#000;border-bottom-color:#000;"><div class="t hr vb" style=""><span>42</span></div></div>
<div class="c " style="left:57px;top:407px;width:97px;height:99px;background-color:#fff;border-right-color:#000;border-bottom-color:#000;"><div class="t hl vb" style=""><span><a>FirstCredit</a></span></div></div>
<div class="c " style="left:153px;top:407px;width:71px;height:99px;background-color:#fff;border-right-color:#000;border-bottom-color:#000;"></div>
<div class="c " style="left:223px;top:407px;width:74px;height:99px;background-color:#ff9900;border-right-color:#000;border-bottom-color:#000;"><div class="t hl vb" style=""><span>Катя Г.</span></div></div>
<div class="c " style="left:34px;top:505px;width:24px;height:19px;background-color:#fff;border-left-color:#ccc;border-top-color:#000;border-right-color:#000;border-bottom-color:#000;"></div>
<div class="c " style="left:57px;top:505px;width:97px;height:19px;background-color:#f3f3f3;border-right-color:#000;border-bottom-color:#000;"><div class="t hl vb" style=""><span>дзвінок 2</span></div></div>
<div class="c " style="left:153px;top:505px;width:71px;height:19px;background-color:#f3f3f3;border-right-color:#000;border-bottom-color:#000;"></div>
<div class="c " style="left:223px;top:505px;width:74px;height:19px;background-color:#ff9900;border-right-color:#000;border-bottom-color:#000;"></div>
<div class="c " style="left:34px;top:523px;width:24px;height:19px;background-color:#fff;border-left-color:#ccc;border-top-color:#000;border-right-color:#000;border-bottom-color:#000;"></div>
<div class="c " style="left:57px;top:523px;width:97px;height:19px;background-color:#fff;border-right-color:#000;border-bottom-color:#000;"><div class="t hl vb" style=""><span>дзвінок 3</span></div></div>
<div class="c " style="left:153px;top:523px;width:71px;height:19px;background-color:#fff;border-right-color:#000;border-bottom-color:#000;"></div>
<div class="c " style="left:223px;top:523px;width:74px;height:19px;background-color:#ff9900;border-right-color:#000;border-bottom-color:#000;"></div>
<div class="c " style="left:34px;top:541px;width:24px;height:19px;background-color:#f3f3f3;border-left-color:#ccc;border-top-color:#000;border-right-color:#000;border-bottom-color:#000;"><div class="t hr vb" style=""><span>43</span></div></div>
<div class="c " style="left:57px;top:541px;width:97px;height:19px;background-color:#f3f3f3;border-right-color:#000;border-bottom-color:#000;"><div class="t hl vb" style=""><span><a>Avocredit</a></span></div></div>
<div class="c " style="left:153px;top:541px;width:71px;height:19px;background-color:#f3f3f3;border-right-color:#000;border-bottom-color:#000;"></div>
<div class="c " style="left:223px;top:541px;width:74px;height:19px;background-color:#ff9900;border-right-color:#000;border-bottom-color:#000;"><div class="t hl vb" style=""><span>Катя Г.</span></div></div>
<div class="c " style="left:34px;top:559px;width:24px;height:19px;background-color:#fff;border-left-color:#ccc;border-top-color:#000;border-right-color:#000;border-bottom-color:#000;"></div>
<div class="c " style="left:57px;top:559px;width:97px;height:19px;background-color:#fff;border-right-color:#000;border-bottom-color:#000;"><div class="t hl vb" style=""><span>дзвінок 2</span></div></div>
<div class="c " style="left:153px;top:559px;width:71px;height:19px;background-color:#fff;border-right-color:#000;border-bottom-color:#000;"></div>
<div class="c " style="left:223px;top:559px;width:74px;height:19px;background-color:#ff9900;border-right-color:#000;border-bottom-color:#000;"></div>
<div class="c " style="left:34px;top:577px;width:24px;height:22px;background-color:#fff;border-left-color:#ccc;border-top-color:#000;border-right-color:#000;border-bottom-color:#000;"></div>
<div class="c " style="left:57px;top:577px;width:97px;height:22px;background-color:#f3f3f3;border-right-color:#000;border-bottom-color:#000;"><div class="t hl vb" style=""><span>дзвінок 3</span></div></div>
<div class="c " style="left:153px;top:577px;width:71px;height:22px;background-color:#f3f3f3;border-right-color:#000;border-bottom-color:#000;"></div>
<div class="c " style="left:223px;top:577px;width:74px;height:22px;background-color:#ff9900;border-right-color:#000;border-bottom-color:#000;"></div>
<div class="c " style="left:34px;top:598px;width:24px;height:19px;background-color:#fff;border-left-color:#ccc;border-top-color:#000;border-right-color:#000;border-bottom-color:#000;"><div class="t hr vb" style=""><span>44</span></div></div>
<div class="c " style="left:57px;top:598px;width:97px;height:19px;background-color:#fff;border-right-color:#000;border-bottom-color:#000;"><div class="t hl vb" style=""><span><a>Bee Credit</a></span></div></div>
<div class="c " style="left:153px;top:598px;width:71px;height:19px;background-color:#fff;border-right-color:#000;border-bottom-color:#000;"></div>
<div class="c " style="left:223px;top:598px;width:74px;height:19px;background-color:#ff9900;border-right-color:#000;border-bottom-color:#000;"><div class="t hl vb" style=""><span>Катя Г.</span></div></div>
<div class="c " style="left:34px;top:616px;width:24px;height:19px;background-color:#fff;border-left-color:#ccc;border-top-color:#000;border-right-color:#000;border-bottom-color:#000;"></div>
<div class="c " style="left:57px;top:616px;width:97px;height:19px;background-color:#f3f3f3;border-right-color:#000;border-bottom-color:#000;"><div class="t hl vb" style=""><span>дзвінок 2</span></div></div>
<div class="c " style="left:153px;top:616px;width:71px;height:19px;background-color:#f3f3f3;border-right-color:#000;border-bottom-color:#000;"></div>
<div class="c " style="left:223px;top:616px;width:74px;height:19px;background-color:#ff9900;border-right-color:#000;border-bottom-color:#000;"></div>
<div class="c " style="left:34px;top:634px;width:24px;height:19px;background-color:#fff;border-left-color:#ccc;border-top-color:#000;border-right-color:#000;border-bottom-color:#000;"></div>
<div class="c " style="left:57px;top:634px;width:97px;height:19px;background-color:#fff;border-right-color:#000;border-bottom-color:#000;"><div class="t hl vb" style=""><span>дзвінок 3</span></div></div>
<div class="c " style="left:153px;top:634px;width:71px;height:19px;background-color:#fff;border-right-color:#000;border-bottom-color:#000;"></div>
<div class="c " style="left:223px;top:634px;width:74px;height:19px;background-color:#ff9900;border-right-color:#000;border-bottom-color:#000;"></div>
<div class="c " style="left:34px;top:652px;width:24px;height:85px;background-color:#ff00ff;border-left-color:#ccc;border-top-color:#000;border-right-color:#000;border-bottom-color:#000;"><div class="t hr vb" style=""><span>45</span></div></div>
<div class="c " style="left:57px;top:652px;width:97px;height:85px;background-color:#f3f3f3;border-right-color:#000;border-bottom-color:#000;"><div class="t hl vb" style=""><span><a>НаВсе</a></span></div></div>
<div class="c " style="left:153px;top:652px;width:71px;height:85px;background-color:#f3f3f3;border-right-color:#000;border-bottom-color:#000;"></div>
<div class="c " style="left:223px;top:652px;width:74px;height:85px;background-color:#ff9900;border-right-color:#000;border-bottom-color:#000;"><div class="t hl vb" style=""><span>Катя Г.</span></div></div>
<div class="c " style="left:34px;top:736px;width:24px;height:19px;background-color:#fff;border-left-color:#ccc;border-top-color:#000;border-right-color:#000;border-bottom-color:#000;"></div>
<div class="c " style="left:57px;top:736px;width:97px;height:19px;background-color:#fff;border-right-color:#000;border-bottom-color:#000;"><div class="t hl vb" style=""><span>дзвінок 2</span></div></div>
<div class="c " style="left:153px;top:736px;width:71px;height:19px;background-color:#fff;border-right-color:#000;border-bottom-color:#000;"></div>
<div class="c " style="left:223px;top:736px;width:74px;height:19px;background-color:#ff9900;border-right-color:#000;border-bottom-color:#000;"></div>
<div class="c " style="left:34px;top:754px;width:24px;height:19px;background-color:#fff;border-left-color:#ccc;border-top-color:#000;border-right-color:#000;border-bottom-color:#000;"></div>
<div class="c " style="left:57px;top:754px;width:97px;height:19px;background-color:#f3f3f3;border-right-color:#000;border-bottom-color:#000;"><div class="t hl vb" style=""><span>дзвінок 3</span></div></div>
<div class="c " style="left:153px;top:754px;width:71px;height:19px;background-color:#f3f3f3;border-right-color:#000;border-bottom-color:#000;"></div>
<div class="c " style="left:223px;top:754px;width:74px;height:19px;background-color:#ff9900;border-right-color:#000;border-bottom-color:#000;"></div>
<div class="c " style="left:34px;top:772px;width:24px;height:59px;background-color:#ff00ff;border-left-color:#ccc;border-top-color:#000;border-right-color:#000;border-bottom-color:#000;"><div class="t hr vb" style=""><span>46</span></div></div>
<div class="c " style="left:57px;top:772px;width:97px;height:59px;background-color:#fff;border-right-color:#000;border-bottom-color:#000;"><div class="t hl vb" style=""><span><a>CreditPlus</a></span></div></div>
<div class="c " style="left:153px;top:772px;width:71px;height:59px;background-color:#fff;border-right-color:#000;border-bottom-color:#000;"></div>
<div class="c " style="left:223px;top:772px;width:74px;height:59px;background-color:#ff9900;border-right-color:#000;border-bottom-color:#000;"><div class="t hl vb" style=""><span>Катя Г.</span></div></div>
<div class="c " style="left:34px;top:830px;width:24px;height:19px;background-color:#fff;border-left-color:#ccc;border-top-color:#000;border-right-color:#000;border-bottom-color:#000;"></div>
<div class="c " style="left:57px;top:830px;width:97px;height:19px;background-color:#f3f3f3;border-right-color:#000;border-bottom-color:#000;"><div class="t hl vb" style=""><span>дзвінок 2</span></div></div>
<div class="c " style="left:153px;top:830px;width:71px;height:19px;background-color:#f3f3f3;border-right-color:#000;border-bottom-color:#000;"></div>
<div class="c " style="left:223px;top:830px;width:74px;height:19px;background-color:#ff9900;border-right-color:#000;border-bottom-color:#000;"></div>
<div class="c " style="left:34px;top:848px;width:24px;height:19px;background-color:#fff;border-left-color:#ccc;border-top-color:#000;border-right-color:#000;border-bottom-color:#000;"></div>
<div class="c " style="left:57px;top:848px;width:97px;height:19px;background-color:#fff;border-right-color:#000;border-bottom-color:#000;"><div class="t hl vb" style=""><span>дзвінок 3</span></div></div>
<div class="c " style="left:153px;top:848px;width:71px;height:19px;background-color:#fff;border-right-color:#000;border-bottom-color:#000;"></div>
<div class="c " style="left:223px;top:848px;width:74px;height:19px;background-color:#ff9900;border-right-color:#000;border-bottom-color:#000;"></div>
<div class="c " style="left:34px;top:866px;width:24px;height:147px;background-color:#ff00ff;border-left-color:#ccc;border-top-color:#000;border-right-color:#000;border-bottom-color:#000;"></div>
<div class="c " style="left:57px;top:866px;width:97px;height:147px;background-color:#f3f3f3;border-right-color:#000;border-bottom-color:#000;"></div>
<div class="c " style="left:153px;top:866px;width:71px;height:147px;background-color:#f3f3f3;border-right-color:#000;border-bottom-color:#000;"><i class="nt"></i></div>
<div class="c " style="left:223px;top:866px;width:74px;height:147px;background-color:#9900ff;border-right-color:#000;border-bottom-color:#000;"></div>
<div class="c " style="left:34px;top:146px;width:24px;height:19px;background-color:#bfbfbf;border-left-color:#ccc;border-right-color:#000;border-bottom-color:#000;"></div>
<div class="c " style="left:57px;top:146px;width:97px;height:19px;background-color:#bfbfbf;border-right-color:#000;border-bottom-color:#000;"></div>
<div class="c " style="left:153px;top:146px;width:71px;height:19px;background-color:#bfbfbf;border-bottom-color:#000;"></div>
<div class="c " style="left:223px;top:146px;width:74px;height:127px;background-color:#bfbfbf;border-left-color:#adadad;border-right-color:#000;border-bottom-color:#000;border-right-width:2px;"><div class="t hc vm b hd" style="padding-top:2px;"><span>Виконавець<br>збору</span></div></div>
<div class="c " style="left:34px;top:164px;width:24px;height:109px;background-color:#fff;border-left-color:#ccc;border-right-color:#000;border-bottom-color:#000;"><div class="t hc vm b hd" style=""><span>№</span></div></div>
<div class="c " style="left:57px;top:164px;width:97px;height:109px;background-color:#fff;border-right-color:#000;border-bottom-color:#000;"><div class="t hc vm b hd" style=""><span>МФО (онлайн )</span></div></div>
<div class="c " style="left:153px;top:164px;width:71px;height:109px;background-color:#fff;border-left-color:#000;border-bottom-color:#000;"><div class="t hc vm b hd" style=""><span>Чи<br>кредитує<br>МФО</span></div></div>
<div class="c " style="left:34px;top:146px;width:23px;height:18px;border:1px solid #b8127a;z-index:5;"></div>
<div class="c " style="left:299px;top:146px;width:298px;height:19px;background-color:#bfbfbf;border-right-color:#000;border-bottom-color:#000;"></div>
<div class="c " style="left:596px;top:146px;width:371px;height:19px;background-color:#bfbfbf;border-right-color:#000;border-bottom-color:#000;"></div>
<div class="c " style="left:966px;top:146px;width:124px;height:19px;background-color:#bfbfbf;border-right-color:#000;border-bottom-color:#000;"></div>
<div class="c " style="left:1089px;top:146px;width:169px;height:19px;background-color:#bfbfbf;border-right-color:#000;border-bottom-color:#000;"><div class="t hc vm b hd" style=""><span>5</span></div></div>
<div class="c " style="left:1257px;top:146px;width:85px;height:19px;background-color:#bfbfbf;border-right-color:#000;border-bottom-color:#000;"></div>
<div class="c " style="left:1341px;top:146px;width:512px;height:19px;background-color:#bfbfbf;border-right-color:#000;border-bottom-color:#000;"><div class="t hc vm b hd" style=""><span>6</span></div></div>
<div class="c " style="left:299px;top:164px;width:298px;height:19px;background-color:#fff;border-right-color:#000;border-bottom-color:#000;"></div>
<div class="c " style="left:596px;top:164px;width:494px;height:19px;background-color:#fff;border-right-color:#000;border-bottom-color:#000;"><div class="t hl vm b hd" style=""><span>Канали погашення</span></div></div>
<div class="c " style="left:1089px;top:164px;width:253px;height:19px;background-color:#fff;border-right-color:#000;border-bottom-color:#000;"><div class="t hc vm b hd" style=""><span>Знижки та бонуси</span></div></div>
<div class="c " style="left:1341px;top:164px;width:512px;height:19px;background-color:#fff;border-right-color:#000;border-bottom-color:#000;"><div class="t hc vm b hd" style=""><span>Дані про компанию та FAQ</span></div></div>
<div class="c " style="left:299px;top:182px;width:107px;height:91px;background-color:#f3f3f3;border-right-color:#000;border-bottom-color:#000;overflow:hidden;"><div class="yl" style="right:13px;top:25px;">(форма зворотнього зв'язку</div><div class="yl" style="right:9px;top:39px;">для подачі скарги або</div><div class="yl" style="right:37px;top:52px;">передзвону тощо)</div><i class="nt"></i></div>
<div class="c " style="left:405px;top:182px;width:94px;height:91px;background-color:#f3f3f3;border-right-color:#000;border-bottom-color:#000;"><div class="t hc vm" style=""><span>Онлайн чат на<br>сайті</span></div></div>
<div class="c " style="left:498px;top:182px;width:99px;height:91px;background-color:#f3f3f3;border-right-color:#000;border-bottom-color:#000;"><div class="t hc vm" style=""><span>Підтримка в<br>месенджерах<br>Телеграм,<br>Фейсбук, Вайбер<br>або будь-який<br>інший</span></div></div>
<div class="c " style="left:596px;top:182px;width:93px;height:91px;background-color:#f3f3f3;border-right-color:#000;border-bottom-color:#000;"><div class="t hc vm" style=""><span>Оплата на сайті<br>МФО без<br>дод.авторизації</span></div><i class="nt"></i></div>
<div class="c " style="left:688px;top:182px;width:94px;height:91px;background-color:#f3f3f3;border-right-color:#000;border-bottom-color:#000;"><div class="t hc vm" style=""><span>Термінали<br>(офлайн<br>погашення)</span></div><i class="nt"></i></div>
<div class="c " style="left:781px;top:182px;width:95px;height:91px;background-color:#f3f3f3;border-right-color:#000;border-bottom-color:#000;"><div class="t hc vm" style=""><span>Банки та<br>компанії<br>партнери, сайт<br>Приват24</span></div></div>
<div class="c " style="left:875px;top:182px;width:92px;height:91px;background-color:#f3f3f3;border-right-color:#000;border-bottom-color:#000;"><div class="t hc vm" style=""><span>Оплата по<br>реквізитам</span></div></div>
<div class="c " style="left:1089px;top:182px;width:85px;height:91px;background-color:#f3f3f3;border-right-color:#000;border-bottom-color:#000;"><div class="t hc vm" style=""><span>Для нових<br>та/або<br>постійних<br>клієнтів</span></div></div>
<div class="c " style="left:1173px;top:182px;width:85px;height:91px;background-color:#f3f3f3;border-right-color:#000;border-bottom-color:#000;"><div class="t hc vm" style=""><span>Реферальна<br>програма</span></div><i class="nt"></i></div>
<div class="c " style="left:966px;top:182px;width:124px;height:91px;background-color:#ff0000;border-right-color:#000;border-bottom-color:#000;"><div class="t hc vm" style="padding-bottom:13px;color:#100000;"><span>На дослідження:<br>вказати, які є варіанти<br>погашення, які ще не<br>враховані у рейтингу</span></div><i class="nt"></i></div>
<div class="c " style="left:1257px;top:182px;width:85px;height:91px;background-color:#00ffff;border-right-color:#000;border-bottom-color:#000;"><div class="t hc vm" style=""><span>Мінімальна %<br>ставка по<br>кредиту для<br>нового клієнта</span></div><i class="nt"></i></div>
<div class="c " style="left:1341px;top:182px;width:95px;height:32px;background-color:#f3f3f3;border-right-color:#000;border-bottom-color:#000;"><div class="t hc vm" style=""><span>Про компанію</span></div></div>
<div class="c " style="left:1435px;top:182px;width:103px;height:32px;background-color:#f3f3f3;border-right-color:#000;border-bottom-color:#000;"><div class="t hc vm" style=""><span>Про видачу<br>кредиту</span></div></div>
<div class="c " style="left:1537px;top:182px;width:100px;height:32px;background-color:#f3f3f3;border-right-color:#000;border-bottom-color:#000;"><div class="t hc vm" style=""><span>Про погашення<br>кредиту</span></div></div>
<div class="c " style="left:1636px;top:182px;width:99px;height:32px;background-color:#f3f3f3;border-right-color:#000;border-bottom-color:#000;"><div class="t hc vm" style=""><span>Про<br>прострочення</span></div><i class="nt"></i></div>
<div class="c " style="left:1341px;top:213px;width:95px;height:60px;background-color:#efefef;border-right-color:#000;border-bottom-color:#000;"><div class="t hc vm" style=""><span>Платіжні<br>реквізити<br>компанії</span></div></div>
<div class="c " style="left:1435px;top:213px;width:103px;height:60px;background-color:#f3f3f3;border-right-color:#000;border-bottom-color:#000;"><div class="t hc vm" style="padding-top:3px;"><span>в блоці<br>Питання/відповіді</span></div></div>
<div class="c " style="left:1537px;top:213px;width:100px;height:60px;background-color:#f3f3f3;border-right-color:#000;border-bottom-color:#000;"><div class="t hc vm" style="padding-top:3px;"><span>в блоці<br>Питання/відповіді</span></div></div>
<div class="c " style="left:1636px;top:213px;width:99px;height:60px;background-color:#f3f3f3;border-right-color:#000;border-bottom-color:#000;"><div class="t hc vm" style="padding-top:3px;"><span>в блоці<br>Питання/відповіді</span></div></div>
<div class="c " style="left:1734px;top:182px;width:119px;height:91px;background-color:#f3f3f3;border-right-color:#000;border-bottom-color:#000;"><div class="t hc vm" style="padding-bottom:3px;"><span>Додаткова<br>інформація в блоці<br>Питання/відповіді</span></div><i class="nt"></i></div>
<div class="c " style="left:1852px;top:146px;width:24px;height:127px;background-color:#fff;border-bottom-color:#ccc;"></div>
<div id="fzv"></div><div id="fzh"></div>
<div id="seltint"></div>
<svg id="arrow" width="90" height="140" style="left:340px;top:315px" viewBox="0 0 90 140"><line x1="14" y1="10" x2="71" y2="113" stroke="#ff0000" stroke-width="3.4" stroke-linecap="round"/><polygon points="80.2,129.6 65.8,115.2 75.8,109.8" fill="#ff0000"/></svg>
</div>
<div id="topdark"></div>
<svg class="ic" style="left:14px;top:21px" width="22" height="29" viewBox="0 0 22 29"><path d="M2 0h12.500L22 7.500V27a2 2 0 0 1-2 2H2a2 2 0 0 1-2-2V2a2 2 0 0 1 2-2z" fill="#0ea85b"/><path d="M14.500 0L22 7.500h-5.500a2 2 0 0 1-2-2z" fill="#0a7d42"/><path d="M4 11.500h14v9.800H4zm1.800 1.800v2.200h4.300v-2.200zm6.100 0v2.200h4.300v-2.200zm-6.100 4v2.200h4.300v-2.200zm6.100 0v2.200h4.300v-2.200z" fill="#fff" fill-rule="evenodd"/></svg>
<div id="title">Рейтинг Файненс 2026</div>
<div id="ybadge"><svg width="12" height="12" viewBox="0 0 24 24"><path fill="#3b2f00" d="M3 3v18h18V3H3zm16 16H5V5h14v14zM7 7h10v2H7zm0 4h10v2H7zm0 4h7v2H7z"/><path d="M2 2l20 20" stroke="#3b2f00" stroke-width="2.400"/></svg></div>
<svg class="ic" style="left:248px;top:19px" width="16" height="16" viewBox="0 0 24 24" ><path fill="#444746" d="M22 9.24l-7.19-.62L12 2 9.19 8.63 2 9.24l5.46 4.73L5.82 21 12 17.27 18.18 21l-1.63-7.03L22 9.24zM12 15.4l-3.76 2.27 1-4.28-3.32-2.88 4.38-.38L12 6.1l1.71 4.04 4.38.38-3.32 2.88 1 4.28L12 15.4z"/></svg>
<svg class="ic" style="left:275px;top:20px" width="16" height="16" viewBox="0 0 24 24" ><path fill="#444746" d="M20 6h-8l-2-2H4c-1.1 0-2 .9-2 2v12c0 1.1.9 2 2 2h16c1.1 0 2-.9 2-2V8c0-1.1-.9-2-2-2zm0 12H4V6h5.17l2 2H20v10zm-8.4-2.6L13.2 14H8v-2h5.2l-1.6-1.6L13 9l4 4-4 4-1.4-1.6z"/></svg>
<svg class="ic" style="left:301px;top:19px" width="17" height="17" viewBox="0 0 24 24" ><path fill="#444746" d="M19.35 10.04C18.67 6.59 15.64 4 12 4 9.11 4 6.6 5.64 5.35 8.04 2.34 8.36 0 10.91 0 14c0 3.31 2.69 6 6 6h13c2.76 0 5-2.24 5-5 0-2.64-2.05-4.78-4.65-4.96zM19 18H6c-2.21 0-4-1.79-4-4s1.79-4 4-4h.71C7.37 7.69 9.48 6 12 6c3.04 0 5.5 2.46 5.5 5.5v.5H19c1.66 0 3 1.34 3 3s-1.34 3-3 3zm-9-3.82l-2.09-2.09L6.5 13.5 10 17l6.01-6.01-1.41-1.41z"/></svg>
<div class="mn" style="left:49px">Файл</div>
<div class="mn" style="left:92px">Правка</div>
<div class="mn" style="left:146px">Вид</div>
<div class="mn" style="left:182px">Вставка</div>
<div class="mn" style="left:241px">Формат</div>
<div class="mn" style="left:298px">Данные</div>
<div class="mn" style="left:355px">Инструменты</div>
<div class="mn" style="left:445px">Расширения</div>
<div class="mn" style="left:528px">Справка</div>
<div id="avH">Н</div>
<svg class="ic" style="left:1530px;top:22px" width="21" height="21" viewBox="0 0 24 24" ><path fill="#444746" d="M13 3c-4.97 0-9 4.03-9 9H1l3.89 3.89.07.14L9 12H6c0-3.87 3.13-7 7-7s7 3.13 7 7-3.13 7-7 7c-1.93 0-3.68-.79-4.94-2.06l-1.42 1.42C8.27 19.99 10.51 21 13 21c4.97 0 9-4.03 9-9s-4.03-9-9-9zm-1 5v5l4.28 2.54.72-1.21-3.5-2.08V8H12z"/></svg>
<svg class="ic" style="left:1571px;top:23px" width="20" height="20" viewBox="0 0 24 24" ><path fill="#444746" d="M20 2H4c-1.1 0-2 .9-2 2v12c0 1.1.9 2 2 2h14l4 4V4c0-1.1-.9-2-2-2zm0 15.17L18.83 16H4V4h16v13.17zM6 6h12v2H6zm0 3h12v2H6zm0 3h12v2H6z"/></svg>
<svg class="ic" style="left:1616px;top:22px" width="22" height="22" viewBox="0 0 24 24" ><path fill="#444746" d="M15 8v8H5V8h10m1-2H4c-.55 0-1 .45-1 1v10c0 .55.45 1 1 1h12c.55 0 1-.45 1-1v-3.5l4 4v-11l-4 4V7c0-.55-.45-1-1-1z"/></svg>
<i class="cr" style="left:1644px;top:31px;border-left-width:3.5px;border-right-width:3.5px;border-top:3.5px solid #444746"></i>
<div id="share"><svg width="15" height="15" viewBox="0 0 24 24" style="position:absolute;left:15px;top:10px"><path fill="#001d35" d="M12 2C6.48 2 2 6.48 2 12s4.48 10 10 10 10-4.48 10-10S17.52 2 12 2zm-1 17.93c-3.95-.49-7-3.85-7-7.93 0-.62.08-1.21.21-1.79L9 15v1c0 1.1.9 2 2 2v1.93zm6.9-2.54c-.26-.81-1-1.39-1.9-1.39h-1v-3c0-.55-.45-1-1-1H8v-2h2c.55 0 1-.45 1-1V7h2c1.1 0 2-.9 2-2v-.41c2.93 1.19 5 4.06 5 7.41 0 2.08-.8 3.97-2.1 5.39z"/></svg><span>Настройки Доступа</span><i class="sdiv"></i></div>
<i class="cr" style="left:1838px;top:31px;border-left-width:4.0px;border-right-width:4.0px;border-top:4.0px solid #001d35"></i>
<div id="avU"><i style="left:6px;top:2px;width:14px;height:12px;border-radius:7px 7px 3px 3px;background:#3b2c2c"></i><i style="left:7px;top:6px;width:12px;height:15px;border-radius:6px;background:#e0b7a5"></i><i style="left:3px;top:22px;width:21px;height:8px;border-radius:8px 8px 0 0;background:#b9bdb5"></i></div>
<div id="tb"></div><div id="srch"><span>Меню</span></div>
<svg class="ic" style="left:24px;top:70px" width="16" height="16" viewBox="0 0 24 24" ><path fill="#444746" d="M15.5 14h-.79l-.28-.27C15.41 12.59 16 11.11 16 9.5 16 5.91 13.09 3 9.5 3S3 5.91 3 9.5 5.91 16 9.5 16c1.61 0 3.09-.59 4.23-1.57l.27.28v.79l5 4.99L20.49 19l-4.99-5zm-6 0C7.01 14 5 11.99 5 9.5S7.01 5 9.5 5 14 7.01 14 9.5 11.99 14 9.5 14z"/></svg>
<svg class="ic" style="left:107px;top:71px" width="17" height="17" viewBox="0 0 24 24"><path fill="#444746" d="M7 17h7.1c2.1 0 3.9-1.6 3.9-3.7S16.2 9.6 14.1 9.6H7.8l2.6-2.6L9 5.6l-5 5 5 5 1.4-1.4-2.6-2.6h6.3c1 0 1.9.7 1.9 1.7s-.9 1.7-1.9 1.7H7v2z"/></svg>
<svg class="ic" style="left:133px;top:71px" width="17" height="17" viewBox="0 0 24 24"><path fill="#444746" transform="translate(24 0) scale(-1 1)" d="M7 17h7.1c2.1 0 3.9-1.6 3.9-3.7S16.2 9.6 14.1 9.6H7.8l2.6-2.6L9 5.6l-5 5 5 5 1.4-1.4-2.6-2.6h6.3c1 0 1.9.7 1.9 1.7s-.9 1.7-1.9 1.7H7v2z"/></svg>
<svg class="ic" style="left:161px;top:71px" width="17" height="17" viewBox="0 0 24 24" ><path fill="#444746" d="M19 8H5c-1.66 0-3 1.34-3 3v6h4v4h12v-4h4v-6c0-1.66-1.34-3-3-3zm-3 11H8v-5h8v5zm4-4h-2v-3H6v3H4v-4c0-.55.45-1 1-1h14c.55 0 1 .45 1 1v4zm-2-12H6v4h12V3zm-2 2v0H8V5h8z"/></svg>
<svg class="ic" style="left:188px;top:71px" width="17" height="17" viewBox="0 0 24 24" ><path fill="#444746" d="M18 4V3c0-.55-.45-1-1-1H5c-.55 0-1 .45-1 1v4c0 .55.45 1 1 1h12c.55 0 1-.45 1-1V6h1v4h-9v3.100c-.6.300-1 1-1 1.700V21c0 .55.45 1 1 1h2c.55 0 1-.45 1-1v-5.200c0-.7-.4-1.400-1-1.700V12h8V4h-3zm-2 2H6V4h10v2zm-4.500 14v-4h1v4h-1z"/></svg>
<div class="tt" style="left:217px">100%</div><i class="cr" style="left:258px;top:78px;border-left-width:3.5px;border-right-width:3.5px;border-top:3.5px solid #444746"></i>
<i class="sp" style="left:277px"></i>
<div class="tt" style="left:288px">р.</div><div class="tt" style="left:315px">%</div>
<div class="tt s" style="left:341px;top:70px">.0</div><div class="tt s" style="left:366px;top:70px">.00</div><div class="tt s" style="left:395px;top:72px;font-size:9.800px">123</div>
<svg class="ic" style="left:347px;top:80px" width="8" height="6" viewBox="0 0 8 6"><path d="M7.500 3H1.500M3.500 .8L1.200 3l2.300 2.200" fill="none" stroke="#444746" stroke-width="1.100"/></svg><svg class="ic" style="left:374px;top:80px" width="8" height="6" viewBox="0 0 8 6"><path d="M.5 3h6M4.500 .8L6.800 3 4.500 5.200" fill="none" stroke="#444746" stroke-width="1.100"/></svg>
<i class="sp" style="left:418px"></i>
<div class="tt" style="left:432px">Arial</div><i class="cr" style="left:488px;top:78px;border-left-width:3.5px;border-right-width:3.5px;border-top:3.5px solid #444746"></i>
<i class="sp" style="left:507px"></i>
<div class="tt" style="left:516px;font-size:15px;top:69px">–</div><div id="fsz">10</div><div class="tt" style="left:570px;font-size:15px;top:70px">+</div>
<i class="sp" style="left:589px"></i>
<svg class="ic" style="left:596px;top:71px" width="17" height="17" viewBox="0 0 24 24" ><path fill="#444746" d="M15.6 10.79c.97-.67 1.65-1.77 1.65-2.79 0-2.26-1.75-4-4-4H7v14h7.04c2.09 0 3.71-1.7 3.71-3.79 0-1.52-.86-2.82-2.15-3.42zM10 6.5h3c.83 0 1.5.67 1.5 1.5s-.67 1.5-1.5 1.5h-3v-3zm3.5 9H10v-3h3.5c.83 0 1.5.67 1.5 1.5s-.67 1.5-1.5 1.5z"/></svg>
<svg class="ic" style="left:623px;top:71px" width="17" height="17" viewBox="0 0 24 24" ><path fill="#444746" d="M10 5v2.5h2.21l-3.42 9H6V19h8v-2.5h-2.21l3.42-9H18V5z"/></svg>
<div class="tt" style="left:654px;font-size:13px;top:71px;text-decoration:line-through">S</div>
<div class="tt" style="left:682px;font-size:13px;top:69px">A</div><i class="ub" style="left:680px;background:#000"></i>
<div style="position:absolute;left:2px;top:0">
<i class="sp" style="left:702px"></i>
<svg class="ic" style="left:713px;top:69px" width="15" height="15" viewBox="0 0 24 24" ><path fill="#444746" d="M16.56 8.94L7.62 0 6.21 1.41l2.38 2.38-5.15 5.15c-.59.59-.59 1.54 0 2.12l5.5 5.5c.29.29.68.44 1.06.44s.77-.15 1.06-.44l5.5-5.5c.59-.58.59-1.53 0-2.12zM5.21 10L10 5.21 14.79 10H5.21zM19 11.5s-2 2.17-2 3.5c0 1.1.9 2 2 2s2-.9 2-2c0-1.33-2-3.5-2-3.5z"/></svg><i class="ub" style="left:713px;background:#ff00ff"></i>
<svg class="ic" style="left:741px;top:71px" width="17" height="17" viewBox="0 0 24 24" ><path fill="#444746" d="M3 3v18h18V3H3zm8 16H5v-6h6v6zm0-8H5V5h6v6zm8 8h-6v-6h6v6zm0-8h-6V5h6v6z"/></svg>
<svg class="ic" style="left:769px;top:71px" width="17" height="17" viewBox="0 0 24 24" ><path fill="#444746" d="M3 5h6v2H5v3H3V5zm18 0v5h-2V7h-4V5h6zM3 19v-5h2v3h4v2H3zm18 0h-6v-2h4v-3h2v5zM2 11h6.2L6.6 9.4 8 8l4 4-4 4-1.4-1.4L8.2 13H2v-2zm20 2h-6.2l1.6 1.6L16 16l-4-4 4-4 1.4 1.4-1.6 1.6H22v2z"/></svg><i class="cr" style="left:793px;top:78px;border-left-width:3.5px;border-right-width:3.5px;border-top:3.5px solid #444746"></i>
<i class="sp" style="left:806px"></i>
<svg class="ic" style="left:811px;top:71px" width="17" height="17" viewBox="0 0 24 24" ><path fill="#444746" d="M15 15H3v2h12v-2zm0-8H3v2h12V7zM3 13h18v-2H3v2zm0 8h18v-2H3v2zM3 3v2h18V3H3z"/></svg><i class="cr" style="left:831px;top:78px;border-left-width:3.5px;border-right-width:3.5px;border-top:3.5px solid #444746"></i>
<svg class="ic" style="left:845px;top:71px" width="17" height="17" viewBox="0 0 24 24" ><path fill="#444746" d="M16 13h-3V3h-2v10H8l4 4 4-4zM4 19v2h16v-2H4z"/></svg><i class="cr" style="left:866px;top:78px;border-left-width:3.5px;border-right-width:3.5px;border-top:3.5px solid #444746"></i>
<svg class="ic" style="left:879px;top:71px" width="17" height="17" viewBox="0 0 24 24" ><path fill="#444746" d="M4 4h2v16H4zm5 7h7.2l-2.6-2.6L15 7l5 5-5 5-1.4-1.4 2.6-2.6H9v-2z"/></svg><i class="cr" style="left:900px;top:78px;border-left-width:3.5px;border-right-width:3.5px;border-top:3.5px solid #444746"></i>
<svg class="ic" style="left:913px;top:71px" width="17" height="17" viewBox="0 0 24 24" ><path fill="#444746" d="M5.500 16l4.300-11h2.100l4.300 11h-2.100l-.9-2.600H8.500l-.9 2.600H5.500zm3.600-4.400h3.500L10.850 6.700 9.100 11.600zM4 19h13.200l-1.600-1.600L17 16l4 4-4 4-1.400-1.400 1.600-1.600H4v-2z"/></svg><i class="cr" style="left:934px;top:78px;border-left-width:3.5px;border-right-width:3.5px;border-top:3.5px solid #444746"></i>
<i class="sp" style="left:949px"></i>
<svg class="ic" style="left:957px;top:71px" width="17" height="17" viewBox="0 0 24 24" ><path fill="#444746" d="M3.9 12c0-1.71 1.39-3.1 3.1-3.1h4V7H7c-2.76 0-5 2.24-5 5s2.24 5 5 5h4v-1.9H7c-1.71 0-3.1-1.39-3.1-3.1zM8 13h8v-2H8v2zm9-6h-4v1.9h4c1.71 0 3.1 1.39 3.1 3.1s-1.39 3.1-3.1 3.1h-4V17h4c2.76 0 5-2.24 5-5s-2.24-5-5-5z"/></svg>
<svg class="ic" style="left:985px;top:72px" width="16" height="16" viewBox="0 0 24 24" ><path fill="#444746" d="M2 4c0-1.1.9-2 2-2h16c1.1 0 2 .9 2 2v12c0 1.1-.9 2-2 2H6l-4 4V4zm2 13.17L5.17 16H20V4H4v13.17zM11 5h2v4h4v2h-4v4h-2v-4H7V9h4z"/></svg>
<svg class="ic" style="left:1012px;top:72px" width="16" height="16" viewBox="0 0 24 24" ><path fill="#444746" d="M19 3H5c-1.1 0-2 .9-2 2v14c0 1.1.9 2 2 2h14c1.1 0 2-.9 2-2V5c0-1.1-.9-2-2-2zm0 16H5V5h14v14zM7 10h2v7H7zm4-3h2v10h-2zm4 6h2v4h-2z"/></svg>
<svg class="ic" style="left:1039px;top:72px" width="16" height="16" viewBox="0 0 24 24" ><path fill="#444746" d="M7 6h10l-5.01 6.3L7 6zm-2.75-.39C6.27 8.2 10 13 10 13v6c0 .55.45 1 1 1h2c.55 0 1-.45 1-1v-6s3.72-4.8 5.74-7.39c.51-.66.04-1.61-.79-1.61H5.04c-.83 0-1.3.95-.79 1.61z"/></svg>
<svg class="ic" style="left:1064px;top:71px" width="17" height="17" viewBox="0 0 24 24" ><path fill="#444746" d="M4 3h15c.6 0 1 .4 1 1v8h-2V9H5v9h7v2H4c-.6 0-1-.4-1-1V4c0-.6.4-1 1-1zm1 2v2h13V5H5zm2 6h3v2H7zm5 0h4v2h-4zm-5 4h3v2H7zm7-1h8v8h-8v-8zm2 2v1.500h1.500V16H16zm3 0v1.500h1.500V16H19zm-3 3v1.500h1.500V19H16zm3 0v1.500h1.500V19H19z"/></svg><i class="cr" style="left:1084px;top:78px;border-left-width:3.5px;border-right-width:3.5px;border-top:3.5px solid #444746"></i>
<svg class="ic" style="left:1101px;top:72px" width="16" height="16" viewBox="0 0 24 24" ><path fill="#444746" d="M18 4H6v2l6.5 6L6 18v2h12v-3h-7l5-5-5-5h7z"/></svg>
<i class="sp" style="left:1126px"></i>
<div class="tt" style="left:1136px;font-weight:700;font-size:13px;top:71px;color:#202124">P<span style="font-size:9px">Y</span></div><i class="cr" style="left:1158px;top:78px;border-left-width:3.5px;border-right-width:3.5px;border-top:3.5px solid #444746"></i>
</div>
<svg class="ic" style="left:1824px;top:71px" width="18" height="18" viewBox="0 0 24 24" ><path fill="#444746" d="M12 8l-6 6 1.41 1.41L12 10.83l4.59 4.58L18 14z"/></svg>
<div id="fb"><span style="left:9px;font-size:10.300px">134:134</span><span style="left:115px;font-size:10.300px">42</span><span class="fx" style="left:95px">fx</span></div><i class="cr" style="left:68px;top:112px;border-left-width:3.5px;border-right-width:3.5px;border-top:3.5px solid #444746"></i>
<div id="vsb"><i class="vth"></i><i class="vbx" style="top:972px"></i><i class="vbx" style="top:985px"></i></div>
<i class="tri up" style="left:1862px;top:977px"></i><i class="tri dn" style="left:1862px;top:990px"></i>
<div id="side"></div>
<svg class="ic" style="left:1885px;top:73px" width="16" height="16" viewBox="0 0 16 16"><rect x="0" y="0" width="16" height="15" fill="#1a73e8"/><rect x="0" y="13.500" width="16" height="1.500" fill="#188038"/><rect x="3" y="3" width="13" height="9.500" fill="#fff"/><text x="4.500" y="11" font-size="7.500" font-family="Liberation Sans,sans-serif" fill="#4285f4" font-weight="700">31</text></svg>
<svg class="ic" style="left:1885px;top:119px" width="17" height="20" viewBox="0 0 20 24"><path d="M2 1h16a1.500 1.500 0 0 1 1.500 1.500v14A1.500 1.500 0 0 1 18 18H2A1.500 1.500 0 0 1 .5 16.500v-14A1.500 1.500 0 0 1 2 1z" fill="#fbbc04"/><circle cx="10" cy="8" r="4" fill="#fff"/><rect x="7.500" y="12" width="5" height="3" fill="#fff"/></svg>
<svg class="ic" style="left:1886px;top:160px" width="19" height="19" viewBox="0 0 22 22"><circle cx="11" cy="11" r="9" fill="none" stroke="#1a73e8" stroke-width="3"/><path d="M6 11l4 4 7-8" stroke="#1a73e8" stroke-width="3" fill="none"/></svg>
<svg class="ic" style="left:1886px;top:206px" width="22" height="22" viewBox="0 0 24 24"><circle cx="8" cy="8" r="4" fill="#1a73e8"/><path d="M0 21c0-5 4-7 8-7s8 2 8 7z" fill="#1a73e8"/><circle cx="17" cy="7" r="3.500" fill="#4285f4"/></svg>
<svg class="ic" style="left:1887px;top:252px" width="16" height="23" viewBox="0 0 18 26"><path d="M9 1C4.600 1 1 4.600 1 9c0 6 8 16 8 16s8-10 8-16c0-4.400-3.600-8-8-8z" fill="#34a853"/><path d="M9 1C4.600 1 1 4.600 1 9c0 1.500.5 3.200 1.300 5L9 9z" fill="#ea4335"/><path d="M9 1v8l6-5.500C13.500 2 11.400 1 9 1z" fill="#4285f4"/><path d="M2.300 14c.8 1.800 1.900 3.600 3 5.300L9 9z" fill="#fbbc04"/><circle cx="9" cy="9" r="3" fill="#fff"/></svg>
<i style="position:absolute;left:1883px;top:305px;width:12px;height:1px;background:#dadce0"></i>
<div style="position:absolute;left:1887px;top:328px;font-size:22px;line-height:26px;color:#202124;font-weight:300">+</div>
<div id="hsb"><i class="hl"></i><i class="hk"></i><i class="hth"></i><i class="hbx" style="left:1835px"></i><i class="hbx" style="left:1848px"></i></div>
<i class="tri lf" style="left:1840px;top:1000px"></i><i class="tri rt" style="left:1853px;top:1000px"></i>
<div id="bbar"></div>
<svg class="ic" style="left:39px;top:1016px" width="17" height="17" viewBox="0 0 24 24"><path fill="#444746" d="M19 13h-6v6h-2v-6H5v-2h6V5h2v6h6v2z"/></svg>
<svg class="ic" style="left:73px;top:1016px" width="17" height="17" viewBox="0 0 24 24"><path fill="#444746" d="M3 18h18v-2H3v2zm0-5h18v-2H3v2zm0-7v2h18V6H3z"/></svg>
<div id="atab"><i class="bdg">1</i><span>Збір</span></div><i class="cr" style="left:175px;top:1024px;border-left-width:4.0px;border-right-width:4.0px;border-top:4.0px solid #0b57d0"></i>
<div class="tab" style="left:203px">Методологія</div><i class="cr" style="left:286px;top:1024px;border-left-width:4.0px;border-right-width:4.0px;border-top:4.0px solid #444746"></i>
<div class="tab" style="left:315px">як рахуємо бали</div><i class="cr" style="left:423px;top:1024px;border-left-width:4.0px;border-right-width:4.0px;border-top:4.0px solid #444746"></i>
<div class="tab" style="left:452px">Цікаве про МФО</div><i class="cr" style="left:558px;top:1024px;border-left-width:4.0px;border-right-width:4.0px;border-top:4.0px solid #444746"></i>
<div id="sum">Сумма: 43,5001</div><i class="cr" style="left:1844px;top:1022px;border-left-width:4.0px;border-right-width:4.0px;border-top:4.0px solid #072711"></i>
<svg class="ic" style="left:1884px;top:1009px" width="17" height="17" viewBox="0 0 24 24"><path fill="#444746" d="M8.600 7.400L10 6l6 6-6 6-1.400-1.400 4.600-4.600z"/></svg>
<div id="tk"></div>
<svg class="ic" style="left:20px;top:1047px" width="44" height="40" viewBox="0 0 44 40"><circle cx="28" cy="20.500" r="4" fill="#f59a23"/><path d="M9 35.500h18.500a5.800 5.800 0 0 0 .8-11.500A8 8 0 0 0 13 22.500a6.600 6.600 0 0 0-4 13z" fill="#d3e0f5"/><path d="M9 35.500h18.500a5.800 5.800 0 0 0 4-1.600C25 32 12 32 4.500 33.200 5.800 34.600 7.300 35.500 9 35.500z" fill="#a9bfe3"/><rect x="14" y="2.500" width="28.500" height="17" rx="8.500" fill="#2b2c2f"/><text x="28.500" y="15.500" text-anchor="middle" font-size="12.500" fill="#fff" font-family="Liberation Sans,sans-serif">17°</text></svg>
<svg class="ic" style="left:372px;top:1055px" width="30" height="30" viewBox="0 0 30 30"><defs><linearGradient id="wg" x1="0" y1="0" x2="1" y2="1"><stop offset="0" stop-color="#6fd8ff"/><stop offset="1" stop-color="#0a8ee8"/></linearGradient></defs><path fill="url(#wg)" d="M1.500 0H14v14H0V1.500A1.500 1.500 0 0 1 1.500 0zM16 0h12.500A1.500 1.500 0 0 1 30 1.500V14H16zM0 16h14v14H1.500A1.500 1.500 0 0 1 0 28.500zM16 16h14v12.500a1.500 1.500 0 0 1-1.500 1.500H16z"/></svg>
<div id="tsr"><svg width="18" height="18" viewBox="0 0 24 24" style="position:absolute;left:14px;top:11px"><circle cx="10" cy="10" r="7.500" fill="none" stroke="#fff" stroke-width="2.200"/><path d="M15.500 15.500L22 22" stroke="#fff" stroke-width="2.600" stroke-linecap="round"/></svg><span>Пошук</span><svg width="52" height="32" viewBox="0 0 52 32" style="position:absolute;left:211px;top:4px"><ellipse cx="26" cy="19" rx="24" ry="11" fill="#d9c28a"/><ellipse cx="16" cy="16" rx="11" ry="8" fill="#e6cf9a"/><path d="M8 24c8 4 26 5 38-1l-2 5c-10 4-26 3-34 0z" fill="#b08b4f"/><path d="M14 22c4-8 10-12 16-13l4-5 2 6c3 2 4 6 2 10-6 4-16 5-24 2z" fill="#6b4a2b"/><path d="M18 20c3-5 8-8 12-8 2 3 2 6 0 9-4 1-8 1-12-1z" fill="#c98a3c"/><circle cx="40" cy="21" r="5" fill="#8a6a3a"/><circle cx="40" cy="20" r="2.500" fill="#efe6cf"/><path d="M4 14l5-4 2 5z" fill="#5b7d3a"/><path d="M44 10l5 2-4 4z" fill="#5b7d3a"/></svg></div>
<svg class="ic" style="left:708px;top:1053px" width="32" height="32" viewBox="0 0 32 32"><defs><linearGradient id="tv" x1="0" y1="0" x2="1" y2="1"><stop offset="0" stop-color="#ffffff"/><stop offset="1" stop-color="#cfcfcf"/></linearGradient></defs><rect x="2" y="10.500" width="22" height="19" rx="2" fill="#5f5f5f"/><rect x="9.500" y="3" width="22" height="19" rx="2" fill="url(#tv)"/><rect x="9.500" y="10.500" width="14.500" height="11.500" fill="#8d8d8d" opacity=".55"/></svg>
<svg class="ic" style="left:763px;top:1053px" width="32" height="32" viewBox="0 0 32 32"><defs><linearGradient id="og" x1="0" y1="0" x2="1" y2="1"><stop offset="0" stop-color="#ff3a44"/><stop offset=".6" stop-color="#f2101f"/><stop offset="1" stop-color="#b5000f"/></linearGradient></defs><ellipse cx="16" cy="16" rx="14.300" ry="14.300" fill="url(#og)"/><ellipse cx="16" cy="16" rx="6.200" ry="10.600" fill="#1b2b52"/></svg>
<svg class="ic" style="left:818px;top:1053px" width="32" height="32" viewBox="0 0 32 32"><defs><linearGradient id="cp1" x1="0" y1="0" x2="1" y2="0"><stop offset="0" stop-color="#1f7ae6"/><stop offset=".45" stop-color="#38a8f0"/><stop offset=".7" stop-color="#8e62f0"/><stop offset="1" stop-color="#e667b8"/></linearGradient><linearGradient id="cp2" x1="0" y1="0" x2="1" y2="0"><stop offset="0" stop-color="#f7c93c"/><stop offset=".35" stop-color="#7fcf62"/><stop offset=".6" stop-color="#f58a3c"/><stop offset="1" stop-color="#f0609a"/></linearGradient></defs><path d="M9.500 3.500h9.800c1.900 0 3.300 1 3.900 2.800l1.100 3.300c.5 1.500 1.500 2.400 3 2.400-1 4-2 8.500-3.500 8.500h-5.300l-2.800-9.400c-.6-2-2-3.100-4-3.100H6c.5-2.700 1.700-4.500 3.500-4.500z" fill="url(#cp1)"/><path d="M22.500 28.500h-9.800c-1.900 0-3.300-1-3.900-2.800l-1.100-3.300c-.5-1.500-1.500-2.400-3-2.400 1-4 2-8.500 3.500-8.500h5.300l2.800 9.400c.6 2 2 3.100 4 3.100H26c-.5 2.700-1.700 4.500-3.500 4.500z" fill="url(#cp2)"/></svg>
<svg class="ic" style="left:873px;top:1053px" width="32" height="32" viewBox="0 0 32 32"><path d="M2 6a2 2 0 0 1 2-2h8l3 3h13a2 2 0 0 1 2 2v3H2z" fill="#e8a317"/><rect x="2" y="9" width="28" height="19" rx="2" fill="#ffd75e"/><rect x="2" y="20" width="28" height="8" fill="#f5b93a"/><rect x="8" y="19" width="16" height="9" rx="1.500" fill="#2f8ee8"/><rect x="11" y="22" width="10" height="2" rx="1" fill="#9fd0ff"/></svg>
<svg class="ic" style="left:928px;top:1053px" width="32" height="32" viewBox="0 0 32 32"><defs><linearGradient id="eg" x1="0" y1="0" x2="1" y2="1"><stop offset="0" stop-color="#35c1f1"/><stop offset=".6" stop-color="#1b7fd6"/><stop offset="1" stop-color="#0c59a4"/></linearGradient></defs><circle cx="16" cy="16" r="14.500" fill="url(#eg)"/><path d="M3 12C6 4 14 1 21 3c6 2 9.500 7 9.500 12 0 4-3 6-6.500 6-3 0-5-1.500-5-3.500 0-1.500 1-2 1-3.500 0-2.500-2.500-5-6-5C9 9 5 10 3 12z" fill="#6ee06a" opacity=".85"/><path d="M12 30c-5-1.500-8-6-8-10.500 0-5 4-8.500 9-8.500-2.500 1.500-4 4-4 7 0 5 4 9.500 10 10-2 1.500-4.500 2.300-7 2z" fill="#0b4f99"/></svg>
<svg class="ic" style="left:983px;top:1053px" width="32" height="32" viewBox="0 0 32 32"><path d="M10 8V5.500A2.500 2.500 0 0 1 12.500 3h7A2.500 2.500 0 0 1 22 5.500V8" fill="none" stroke="#35a7ea" stroke-width="2.200"/><path d="M2 8h28v17a4 4 0 0 1-4 4H6a4 4 0 0 1-4-4z" fill="#f3f3f3"/><rect x="9.500" y="12" width="6" height="6" fill="#f25022"/><rect x="16.500" y="12" width="6" height="6" fill="#7fba00"/><rect x="9.500" y="19" width="6" height="6" fill="#00a4ef"/><rect x="16.500" y="19" width="6" height="6" fill="#ffb900"/></svg>
<svg class="ic" style="left:1038px;top:1053px" width="32" height="32" viewBox="0 0 32 32"><rect x="1" y="1" width="30" height="30" fill="#e2231a"/><path d="M10 7h4.500v14H23v4H10z" fill="#fff"/></svg>
<svg class="ic" style="left:1093px;top:1053px" width="32" height="32" viewBox="0 0 32 32"><circle cx="13" cy="6.500" r="4.500" fill="#7b83eb"/><circle cx="24" cy="9" r="3.500" fill="#5b5fc7"/><path d="M19 13h9.500a1.500 1.500 0 0 1 1.500 1.500V22a5 5 0 0 1-5 5 5 5 0 0 1-6-5z" fill="#5b5fc7"/><path d="M7 13h14.500a1.500 1.500 0 0 1 1.500 1.500V23a8 8 0 0 1-16 0z" fill="#7b83eb"/><rect x="1" y="13" width="14" height="14" rx="2" fill="#4b53bc"/><path d="M4.500 17h7v2H9v6H7v-6H4.500z" fill="#fff"/></svg>
<svg class="ic" style="left:1148px;top:1053px" width="32" height="32" viewBox="0 0 32 32"><rect x="1" y="1" width="30" height="30" fill="#0061fe"/><path d="M11 8l5 3.200-5 3.200-5-3.200zM21 8l5 3.200-5 3.200-5-3.200zM6 17.600l5-3.200 5 3.200-5 3.200zM21 14.400l5 3.200-5 3.200-5-3.200zM11 21.900l5-3.200 5 3.200-5 3.200z" fill="#fff"/></svg>
<div id="tkact"></div><i class="tkdot a" style="left:1207px;width:22px"></i>
<svg class="ic" style="left:1203px;top:1053px" width="32" height="32" viewBox="0 0 32 32"><circle cx="16" cy="16" r="14.500" fill="#fff"/><path d="M16 1.500a14.500 14.500 0 0 1 12.560 7.250H16a7.250 7.250 0 0 0-6.280 3.620L3.440 8.750A14.500 14.500 0 0 1 16 1.500z" fill="#ea4335"/><path d="M28.560 8.750A14.500 14.500 0 0 1 16 30.500l6.280-10.880A7.250 7.250 0 0 0 22.280 12.370z" fill="#fbbc04"/><path d="M16 30.500A14.500 14.500 0 0 1 3.440 8.750l6.280 10.880A7.250 7.250 0 0 0 16 23.250l6.280-3.630z" fill="#34a853"/><path d="M28.560 8.750H16a7.250 7.250 0 0 1 6.280 10.870z" fill="#fbbc04"/><circle cx="16" cy="16" r="6.800" fill="#fff"/><circle cx="16" cy="16" r="5.400" fill="#4285f4"/></svg>
<svg class="ic" style="left:1258px;top:1053px" width="32" height="32" viewBox="0 0 32 32"><circle cx="15" cy="17" r="13.500" fill="#2aa3df"/><path d="M6.500 17l16-6.500c.8-.3 1.400.2 1.100 1.300l-2.700 12.500c-.2.900-.8 1.100-1.500.7l-4.200-3.100-2 2c-.3.300-.5.400-.9.400l.3-4.300 7.800-7c.3-.3-.1-.5-.5-.2l-9.600 6-4.100-1.300c-.9-.3-.9-.9.300-1.500z" fill="#fff"/><circle cx="25" cy="7.500" r="8" fill="#8c8c8c"/><text x="25" y="11.500" text-anchor="middle" font-size="11" fill="#fff" font-family="Liberation Sans,sans-serif">57</text></svg>
<svg class="ic" style="left:1313px;top:1053px" width="32" height="32" viewBox="0 0 32 32"><circle cx="16" cy="16" r="14.500" fill="#76b83f"/><path d="M3 22a14.500 14.500 0 0 0 26 0c-8 4-18 4-26 0z" fill="#5a9a2c"/><path d="M10 9h4v9c0 2 1 3 2.500 3s2.500-1 2.500-3V9h4v15h-3.500v-1.500C18.500 24 17 24.500 15.500 24.500c-.6 0-1.100-.1-1.500-.3V29h-4z" fill="#fff"/></svg>
<svg class="ic" style="left:1368px;top:1053px" width="32" height="32" viewBox="0 0 32 32"><path d="M16 2c7 0 13 3 13 12s-6 12-13 12c-1 0-2 0-3-.2L9 30v-5C5 23 3 19.500 3 14 3 5 9 2 16 2z" fill="#7360f2"/><path d="M16 4.500c5.500 0 10.500 2 10.500 9.500S21.500 23.500 16 23.500c-1 0-2-.1-3-.3l-2 2.300v-3C7.500 21 5.500 18.500 5.500 14c0-7.500 5-9.500 10.500-9.500z" fill="#fff"/><path d="M11.500 8.500c.5-.3 1-.2 1.300.3l1.200 2c.3.500.2 1-.2 1.400l-.8.700c.6 1.700 1.800 2.900 3.500 3.600l.8-.9c.4-.4.900-.5 1.400-.2l2 1.200c.5.300.6.800.3 1.300-.7 1.200-1.700 1.800-2.900 1.400-4-1.300-6.800-4.100-8-8-.3-1.100.3-2.100 1.400-2.800z" fill="#7360f2"/><path d="M17 8c2.500.3 4.200 2 4.500 4.500M17 10.200c1.300.2 2.100 1 2.300 2.300" stroke="#7360f2" stroke-width="1" fill="none" stroke-linecap="round"/></svg>
<svg class="ic" style="left:1423px;top:1053px" width="32" height="32" viewBox="0 0 32 32"><rect x="10" y="2" width="20" height="28" rx="2" fill="#21a366"/><rect x="10" y="2" width="10" height="9.500" fill="#107c41"/><rect x="20" y="2" width="10" height="9.500" rx="1" fill="#33c481"/><rect x="10" y="11.500" width="10" height="9.500" fill="#185c37"/><rect x="20" y="11.500" width="10" height="9.500" fill="#21a366"/><rect x="10" y="21" width="20" height="9" rx="1" fill="#185c37"/><rect x="20" y="21" width="10" height="9" fill="#107c41"/><rect x="2" y="8" width="16" height="16" rx="1.500" fill="#107c41"/><path d="M6 11.500h2.600l1.500 3 1.600-3h2.400l-2.700 4.500 2.800 4.500h-2.600l-1.600-3.100-1.700 3.100H5.800l2.900-4.500z" fill="#fff"/></svg>
<i class="tkdot" style="left:774px"></i>
<i class="tkdot" style="left:884px"></i>
<i class="tkdot" style="left:1104px"></i>
<i class="tkdot" style="left:1269px"></i>
<i class="tkdot" style="left:1434px"></i>
<svg class="ic" style="left:1548px;top:1062px" width="18" height="14" viewBox="0 0 18 14"><path d="M2.500 10.500L9 4l6.500 6.500" fill="none" stroke="#fff" stroke-width="1.800"/></svg>
<svg class="ic" style="left:1586px;top:1058px" width="26" height="24" viewBox="0 0 26 24"><path d="M6 17h11a4 4 0 0 0 .5-8A6 6 0 0 0 6.500 8.500 4.500 4.500 0 0 0 6 17z" fill="#e8e8e8"/><path d="M6 17h8l-6-7.500c-3 0-5 1.500-5 4s1.500 3.500 3 3.500z" fill="#9a9a9a"/><circle cx="16" cy="16.500" r="5" fill="#1e7fe0"/><rect x="15.300" y="15.500" width="1.400" height="3.800" fill="#fff"/><circle cx="16" cy="13.800" r=".9" fill="#fff"/></svg>
<div class="tkt" style="left:1632px;top:1061px">УКР</div>
<svg class="ic" style="left:1681px;top:1058px" width="22" height="20" viewBox="0 0 22 20"><g fill="none" stroke="#fff" stroke-width="1.600" stroke-linecap="round"><path d="M1.500 7.500a13.500 13.500 0 0 1 19 0"/><path d="M4.500 10.800a9.200 9.200 0 0 1 13 0"/><path d="M7.500 14a5 5 0 0 1 7 0"/></g><circle cx="11" cy="17" r="1.500" fill="#fff"/></svg>
<svg class="ic" style="left:1711px;top:1058px" width="24" height="22" viewBox="0 0 24 22"><path d="M2 8h3.500L10 4v14l-4.500-4H2z" fill="none" stroke="#fff" stroke-width="1.500" stroke-linejoin="round"/><path d="M13 8a4 4 0 0 1 0 6" fill="none" stroke="#fff" stroke-width="1.400" stroke-linecap="round"/><path d="M15.500 5.500a7.500 7.500 0 0 1 0 11" fill="none" stroke="#8a8f96" stroke-width="1.400" stroke-linecap="round"/><path d="M18 3.500a10.500 10.500 0 0 1 0 15" fill="none" stroke="#5a6068" stroke-width="1.400" stroke-linecap="round"/></svg>
<svg class="ic" style="left:1742px;top:1061px" width="28" height="16" viewBox="0 0 28 16"><rect x="1" y="1.500" width="23" height="12" rx="3.500" fill="none" stroke="#fff" stroke-width="1.500"/><rect x="3.300" y="3.800" width="17" height="7.400" rx="1.800" fill="#fff"/><path d="M25.500 5.500v4" stroke="#fff" stroke-width="1.800" stroke-linecap="round"/></svg>
<div class="tkt" style="left:1772px;top:1061px">82%</div>
<div class="tkt r" style="top:1051px">17:19</div><div class="tkt r" style="top:1071px">12.03.2026</div>
<i style="position:absolute;left:1860px;top:273px;width:10px;height:3px;background:#dde3ea"></i>
</body></html>
